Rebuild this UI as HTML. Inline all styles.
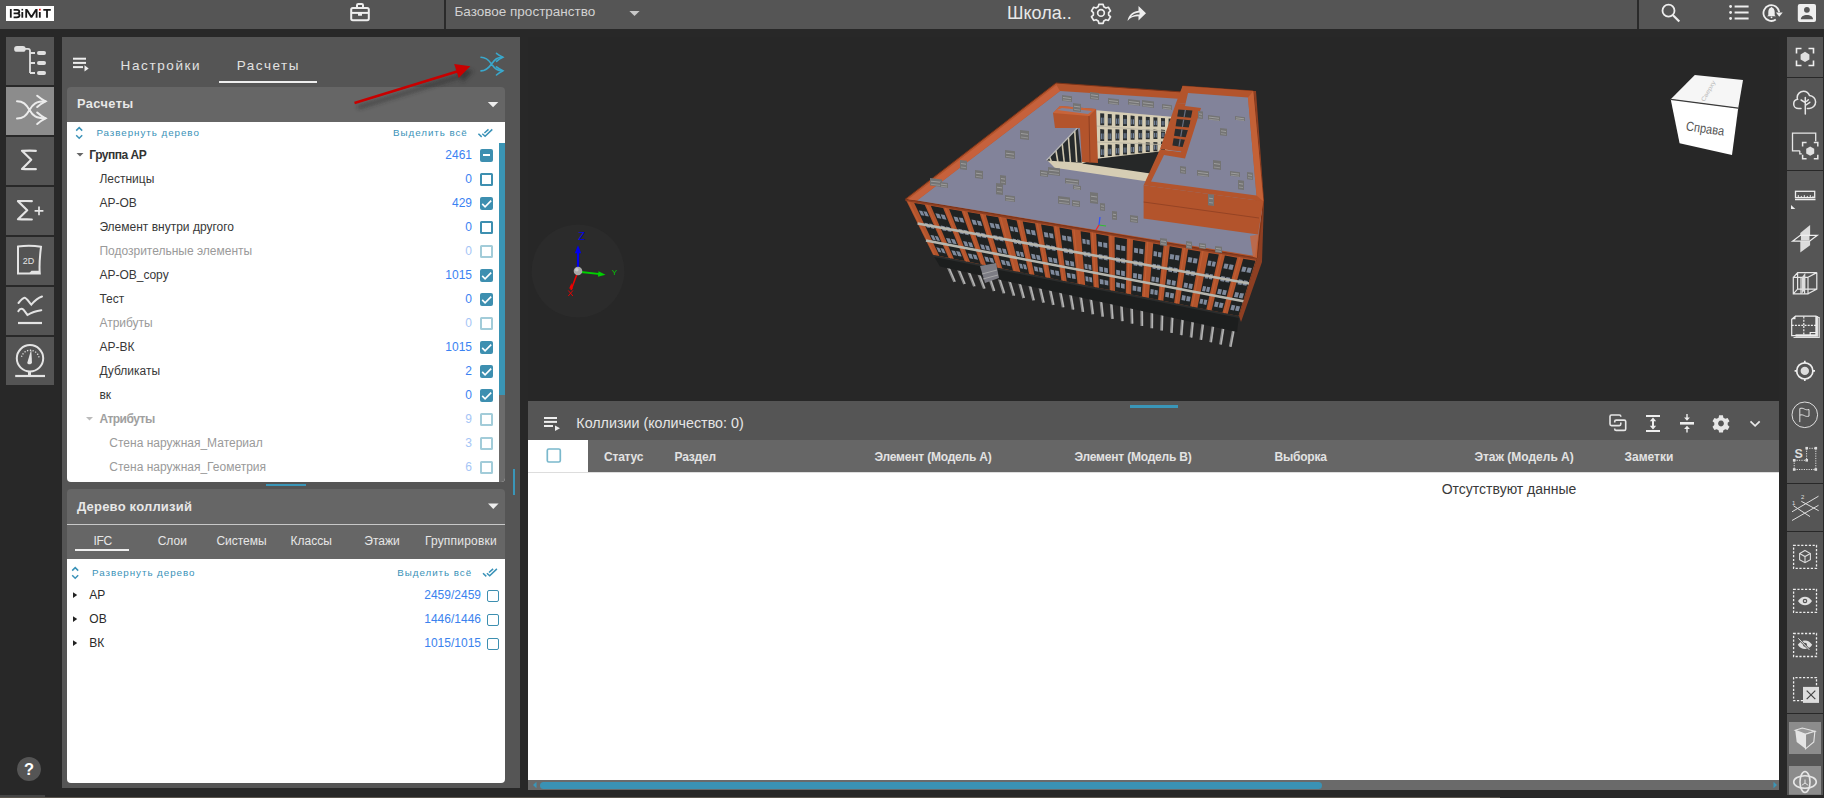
<!DOCTYPE html>
<html><head><meta charset="utf-8">
<style>
*{box-sizing:border-box;margin:0;padding:0}
html,body{width:1824px;height:798px;overflow:hidden;background:#282828;font-family:"Liberation Sans",sans-serif;position:relative}
.a{position:absolute}
.t{position:absolute;white-space:nowrap;line-height:1;z-index:2}
svg{position:absolute;overflow:visible;z-index:2}
/* top bar */
#top{left:0;top:0;width:1824px;height:29px;background:#555}
.sbtn{position:absolute;left:6px;width:48px;height:48px;background:#545454}
.rt{position:absolute;left:1787px;width:36px;background:#555}
.row .lbl{position:absolute;font-size:12px;color:#333}
.cb{position:absolute;width:14px;height:14px;border:2px solid #3d8fb0;border-radius:2px}
.cbf{background:#3d8fb0}
.num{position:absolute;font-size:12px;color:#3b82f0;text-align:right}
</style></head>
<body>
<!-- TOP BAR -->
<div id="top" class="a"></div>
<div class="a" style="left:6px;top:6px;width:48px;height:15px;background:#fff"></div>
<svg style="left:0;top:0" width="60" height="28" viewBox="0 0 60 28">
 <g fill="none" stroke="#1a1a1a" stroke-width="1.8">
  <path d="M10.8 9v8.7"/>
  <path d="M13.6 9.9h3.4c1.5 0 2.3.7 2.3 1.7s-.8 1.7-2.1 1.7h-2.9M13.6 13.3h3.3c1.6 0 2.6.8 2.6 2s-1 2-2.6 2h-3.3"/>
  <path d="M22.3 12v5.7"/>
  <path d="M26.2 9v8.7M26.8 9.8l4.6 7.4 4.6-7.4M36.6 9v8.7" stroke-linejoin="bevel"/>
  <path d="M39.8 12v5.7"/>
  <path d="M43.3 9.8h7.5M47 9.8v7.9"/>
 </g>
 <rect x="21.5" y="8.9" width="1.6" height="1.6" fill="#1a1a1a"/>
 <rect x="39" y="8.8" width="1.7" height="1.7" fill="#e00"/>
</svg>
<svg style="left:340px;top:0" width="40" height="28" viewBox="340 0 40 28">
 <g fill="none" stroke="#eee" stroke-width="2">
  <rect x="351.2" y="8" width="17.6" height="12.2" rx="1.6"/>
  <path d="M357 7.5V5.3c0-.7.5-1.2 1.2-1.2h3.6c.7 0 1.2.5 1.2 1.2v2.2"/>
  <path d="M351 12.9h18"/>
 </g>
 <rect x="358" y="12.5" width="4" height="3.3" rx=".6" fill="#eee"/>
</svg>
<svg style="left:620px;top:0" width="30" height="28" viewBox="620 0 30 28"><path d="M629.4 11h10.2l-5.1 5z" fill="#c8c8c8"/></svg>
<svg style="left:1085px;top:0" width="70" height="28" viewBox="1085 0 70 28">
 <g transform="translate(1101 12.9) scale(0.93)" fill="none" stroke="#eee" stroke-width="1.8" stroke-linejoin="round">
  <path d="M-2.3 -9.2h4.6l.7 2.6 2.3 1.3 2.6-.8 2.3 4-2 1.8v2.6l2 1.8-2.3 4-2.6-.8-2.3 1.3-.7 2.6h-4.6l-.7-2.6-2.3-1.3-2.6.8-2.3-4 2-1.8v-2.6l-2-1.8 2.3-4 2.6.8 2.3-1.3z"/>
  <circle r="3.6"/>
 </g>
 <path d="M1138.5 6l7.5 7.2-7.5 7.2v-4.1c-5 0-8.3 1.4-11 4.6 1-5 4.1-9.3 11-10.2z" fill="#eee"/>
 <path d="M1139.5 12.6c-4 .3-6.8 1.8-8.6 4 2.2-1.5 5-2.1 8.6-2.1z" fill="#555"/>
</svg>
<svg style="left:1650px;top:0" width="174" height="28" viewBox="1650 0 174 28">
 <g fill="none" stroke="#eee" stroke-width="1.8">
  <circle cx="1668.5" cy="10.7" r="6"/>
  <path d="M1673 15.2l6.3 6.3" stroke-width="2.2"/>
  <path d="M1734.6 6.5h14M1734.6 12.5h14M1734.6 18.5h14" stroke-width="1.8"/>
  <path d="M1775.8 19.6A7.9 7.9 0 1 1 1779.2 12.2" stroke-width="1.8"/>
 </g>
 <g fill="#eee">
  <circle cx="1730.6" cy="6.5" r="1.4"/><circle cx="1730.6" cy="12.5" r="1.4"/><circle cx="1730.6" cy="18.5" r="1.4"/>
  <path d="M1775.9 12.4h6.8l-3.4 4.4z"/>
  <path d="M1768.3 15.3v-3.3c0-2.3 1.1-4 2.7-4.5l.5-.9.5.9c1.6.5 2.7 2.2 2.7 4.5v3.3l1.2 1h-8.8z"/>
  <circle cx="1771.5" cy="17.3" r=".9"/>
  <rect x="1797.8" y="4" width="18.2" height="18" rx="2"/>
 </g>
 <g fill="#555">
  <circle cx="1806.9" cy="9.8" r="2.9"/>
  <path d="M1800.8 19.2c0-2.6 2.8-4.2 6.1-4.2s6.1 1.6 6.1 4.2z"/>
 </g>
</svg>
<div class="a" style="left:444px;top:0;width:2px;height:29px;background:#2a2a2a"></div>
<div class="a" style="left:1637px;top:0;width:2px;height:29px;background:#2a2a2a"></div>
<div class="t" style="left:454.5px;top:5px;font-size:13.5px;color:#d2d2d2">Базовое пространство</div>
<div class="t" style="left:1007px;top:4px;font-size:18px;color:#e8e8e8">Школа..</div>

<!-- LEFT SIDEBAR -->
<div class="sbtn" style="top:37px"></div>
<div class="sbtn" style="top:87px;background:#8c8c8c"></div>
<div class="sbtn" style="top:137px"></div>
<div class="sbtn" style="top:187px"></div>
<div class="sbtn" style="top:237px"></div>
<div class="sbtn" style="top:287px"></div>
<div class="sbtn" style="top:337px"></div>
<div class="a" style="left:17px;top:757px;width:24px;height:24px;border-radius:50%;background:#555"></div>
<div class="t" style="left:17px;top:760.5px;width:24px;text-align:center;font-size:16.5px;font-weight:bold;color:#fff">?</div>
<div class="a" style="left:0;top:797px;width:1500px;height:1px;background:#5a554e"></div>
<div class="a" style="left:0;top:795px;width:45px;height:2px;background:#444"></div>
<svg style="left:6px;top:37px" width="48" height="350" viewBox="0 0 48 350">
 <g fill="#e0e0e0">
  <rect x="8.1" y="9" width="11.6" height="5.8" rx="2.9"/>
  <rect x="31" y="14.1" width="9" height="3.9" rx="1.95"/>
  <rect x="31" y="24.1" width="9" height="3.9" rx="1.95"/>
  <rect x="31" y="34.1" width="9" height="3.9" rx="1.95"/>
 </g>
 <g fill="none" stroke="#e0e0e0" stroke-width="1.8">
  <path d="M19 11.8h3c1.2 0 2 .8 2 2V36M24 16h5M24 26h5M24 36h5"/>
 </g>
 <g fill="none" stroke="#ececec" stroke-width="2" stroke-linecap="round" transform="translate(0 50)">
  <path d="M11 14.3C17 14.3 20 17 23.5 23S30 31.3 39.5 31.3M11 31.5C17 31.5 20 29 23.5 23S30 14.3 39.5 14.3"/>
  <path d="M31.2 8.7C34 11 36 12.5 39.5 14.3 36 16 34 17.5 31.2 20M31.2 25.5C34 28 36 29.5 39.5 31.3 36 33 34 34.5 31.2 37"/>
 </g>
 <g fill="none" stroke="#e4e4e4" stroke-width="2.2" stroke-linecap="round" stroke-linejoin="round" transform="translate(0 100)">
  <path d="M29.8 13.8C25 13.4 20 13.6 16 13.8L25.2 22.8 16 32C20.5 32.3 25 32.1 29.8 32.2"/>
 </g>
 <g fill="none" stroke="#e4e4e4" stroke-width="2.2" stroke-linecap="round" stroke-linejoin="round" transform="translate(0 150)">
  <path d="M25.8 14.2C21 13.8 16 14 12 14.2L21.2 23.3 12 32.2C16.5 32.6 21 32.4 25.8 32.5"/>
  <path d="M33 19.4v8.8M28.6 23.8h8.8" stroke-width="1.7" stroke-linecap="butt"/>
 </g>
 <g transform="translate(0 200)">
  <path d="M12 9.5C19 8.5 28 8.5 35 9.8 34 18 33 28 33.8 36.6H12z" fill="none" stroke="#e4e4e4" stroke-width="2"/>
  <path d="M23 36.4l2.4-2.6h8.6v2.6z" fill="#e4e4e4"/>
  <text x="22.6" y="27" font-family="Liberation Sans" font-size="9" fill="#e4e4e4" text-anchor="middle">2D</text>
 </g>
 <g fill="none" stroke="#e4e4e4" stroke-width="2" stroke-linecap="round" transform="translate(0 250)">
  <path d="M12.5 16C15 13 17 11 18.5 10.8S21.5 13 25.3 17.6C28 14.5 31.5 11 36 9.5"/>
  <path d="M12.3 24.2C13.5 22 15 21.5 16.5 22S19 25 21.5 28C24.5 26 29 24 35.3 23.2"/>
  <path d="M12 36h24" stroke-width="2.2" stroke-linecap="butt"/>
 </g>
 <g transform="translate(0 300)">
  <circle cx="24" cy="21.3" r="13.2" fill="none" stroke="#e4e4e4" stroke-width="2"/>
  <path d="M9.2 39h29.8" stroke="#e4e4e4" stroke-width="2.2"/>
  <path d="M22 34.5h3v3.5h-3z" fill="#e4e4e4"/>
  <path d="M25.2 12.4L26 25.5C25.8 27.5 22 28 21.2 26z" fill="#e4e4e4"/>
  <g stroke="#e4e4e4" stroke-width="1.3" stroke-dasharray="1.2 1.6" fill="none"><path d="M15.5 19.8A9 9 0 0 1 33 20.5"/></g>
 </g>
</svg>

<!-- LEFT PANEL -->
<div class="a" style="left:62px;top:37px;width:458px;height:751px;background:#555"></div>
<div class="t" style="left:120.6px;top:58.6px;font-size:13.5px;color:#e2e2e2;letter-spacing:1.6px">Настройки</div>
<div class="t" style="left:236.8px;top:58.6px;font-size:13.5px;color:#e2e2e2;letter-spacing:1.5px">Расчеты</div>
<svg style="left:60px;top:37px" width="460" height="90" viewBox="60 37 460 90">
 <g fill="#eee">
  <rect x="73" y="57.7" width="13" height="2"/><rect x="73" y="61.9" width="13" height="2"/><rect x="73" y="66.1" width="10" height="2"/>
  <path d="M84.5 65.3l4.2 3.1-4.2 3.1z"/>
 </g>
 <g fill="none" stroke="#3aa8cc" stroke-width="1.6" stroke-linecap="round">
  <path d="M481 57.3C485.5 57.3 488 59 491.5 64S497.5 70.8 502.5 70.8M481 70.9C485.5 70.9 488 69 491.5 64S497.5 57.2 502.5 57.2"/>
  <path d="M496.5 53.3C498.5 55 500.5 56 502.8 57.2 500.5 58.3 498.5 59.5 496.5 61.3M496.5 66.8C498.5 68.5 500.5 69.6 502.8 70.8 500.5 72 498.5 73 496.5 75"/>
 </g>
 <path d="M487.8 102h10.5l-5.25 5.2z" fill="#eee"/>
</svg>
<div class="t" style="left:77px;top:97.9px;font-size:12.8px;font-weight:bold;color:#e8e8e8;letter-spacing:0.4px">Расчеты</div>
<div class="t" style="left:77px;top:500px;font-size:13px;font-weight:bold;color:#e8e8e8;letter-spacing:0.2px">Дерево коллизий</div>
<svg style="left:480px;top:495px" width="30" height="20" viewBox="480 495 30 20"><path d="M488 503.6h10.6l-5.3 5.5z" fill="#eee"/></svg>
<div class="t" style="left:93.4px;top:535px;font-size:12px;color:#e6e6e6;letter-spacing:-0.3px">IFC</div>
<div class="t" style="left:157.7px;top:535px;font-size:12px;color:#e6e6e6">Слои</div>
<div class="t" style="left:216.4px;top:535px;font-size:12px;color:#e6e6e6">Системы</div>
<div class="t" style="left:290.6px;top:535px;font-size:12px;color:#e6e6e6">Классы</div>
<div class="t" style="left:364.3px;top:535px;font-size:12px;color:#e6e6e6">Этажи</div>
<div class="t" style="left:424.9px;top:535px;font-size:12px;color:#e6e6e6;letter-spacing:0.2px">Группировки</div>
<div class="a" style="left:75px;top:549px;width:54px;height:2px;background:#eee;z-index:2"></div>
<!-- red arrow -->
<svg style="left:340px;top:40px;z-index:9" width="180" height="80" viewBox="340 40 180 80">
 <defs><filter id="sh" x="-20%" y="-50%" width="140%" height="200%"><feGaussianBlur stdDeviation="2"/></filter></defs>
 <g transform="translate(3.5 4.5)" opacity="0.55" filter="url(#sh)">
  <path d="M354.5 103L456 72" stroke="#222" stroke-width="3"/>
  <path d="M470.3 66.3L454.2 64 458.7 77.9z" fill="#222"/>
 </g>
 <path d="M354.5 103.1L457 71.5" stroke="#c80000" stroke-width="2.6"/>
 <path d="M470.3 66.3L454.2 64 458.7 77.9z" fill="#c80000"/>
</svg>
<div class="a" style="left:219px;top:81px;width:98px;height:2px;background:#eee"></div>

<div class="a" style="left:67px;top:87px;width:438px;height:35px;background:#666;border-radius:4px 4px 0 0"></div>
<div class="a" style="left:67px;top:122px;width:438px;height:360px;background:#fff;border-radius:0 0 4px 4px"></div>
<!-- section1 content -->
<div class="a" style="left:499px;top:143px;width:6px;height:339px;background:#6b6b6b;border-radius:0 0 4px 0"></div>
<div class="a" style="left:499px;top:143px;width:6px;height:252px;background:#3a94b4"></div>
<div class="t" style="left:96.4px;top:128px;font-size:9.8px;letter-spacing:0.95px;color:#3a92b8">Развернуть дерево</div>
<div class="t" style="left:393px;top:128px;font-size:9.8px;letter-spacing:0.95px;color:#3a92b8">Выделить всё</div>
<svg style="left:0;top:0" width="520" height="600" viewBox="0 0 520 600">
 <g fill="none" stroke="#3a92b8" stroke-width="1.5">
  <path d="M76.2 130.6l3-3 3 3M76.2 135.2l3 3 3-3"/>
  <path d="M478.4 133.7l3.3 3.2M482.3 133.7l2.8 2.6 7.2-6.9M484.4 133l4.1-3.6" stroke-width="1.5"/>
  <path d="M72.2 570.6l3-3 3 3M72.2 575.2l3 3 3-3"/>
  <path d="M483 573.2l3.3 3.2M486.9 573.2l2.8 2.6 7.2-6.9M489 572.5l4.1-3.6" stroke-width="1.5"/>
 </g>
</svg>
<!--ROWS-->
<div class="t" style="left:89.3px;top:149.04px;font-size:12px;color:#333;font-weight:bold;letter-spacing:-0.5px">Группа АР</div>
<div class="t" style="right:1352px;top:149.04px;font-size:12px;color:#3b82f2">2461</div>
<div class="a" style="left:479.8px;top:148.6px;width:13.4px;height:13.4px;background:#3d8fb0;border-radius:2px"></div><div class="a" style="left:482.8px;top:154.1px;width:7.4px;height:2.4px;background:#fff"></div>
<div class="t" style="left:99.4px;top:173.04px;font-size:12px;color:#383838">Лестницы</div>
<div class="t" style="right:1352px;top:173.04px;font-size:12px;color:#3b82f2">0</div>
<div class="a" style="left:479.8px;top:172.6px;width:13.4px;height:13.4px;border:2px solid #3d8fb0;border-radius:1.5px"></div>
<div class="t" style="left:99.4px;top:197.04px;font-size:12px;color:#383838">АР-ОВ</div>
<div class="t" style="right:1352px;top:197.04px;font-size:12px;color:#3b82f2">429</div>
<div class="a" style="left:479.8px;top:196.6px;width:13.4px;height:13.4px;background:#3d8fb0;border-radius:2px"></div><svg style="left:479.8px;top:196.6px" width="13.4" height="13.4" viewBox="0 0 14 14"><path d="M2.3 7.2l3 3 6.4-6.4" fill="none" stroke="#fff" stroke-width="1.7"/></svg>
<div class="t" style="left:99.4px;top:221.04px;font-size:12px;color:#383838">Элемент внутри другого</div>
<div class="t" style="right:1352px;top:221.04px;font-size:12px;color:#3b82f2">0</div>
<div class="a" style="left:479.8px;top:220.6px;width:13.4px;height:13.4px;border:2px solid #3d8fb0;border-radius:1.5px"></div>
<div class="t" style="left:99.4px;top:245.04px;font-size:12px;color:#9a9a9a">Подозрительные элементы</div>
<div class="t" style="right:1352px;top:245.04px;font-size:12px;color:#a6c6f6">0</div>
<div class="a" style="left:479.8px;top:244.6px;width:13.4px;height:13.4px;border:2px solid #a2ccd9;border-radius:1.5px"></div>
<div class="t" style="left:99.4px;top:269.04px;font-size:12px;color:#383838">АР-ОВ_copy</div>
<div class="t" style="right:1352px;top:269.04px;font-size:12px;color:#3b82f2">1015</div>
<div class="a" style="left:479.8px;top:268.6px;width:13.4px;height:13.4px;background:#3d8fb0;border-radius:2px"></div><svg style="left:479.8px;top:268.6px" width="13.4" height="13.4" viewBox="0 0 14 14"><path d="M2.3 7.2l3 3 6.4-6.4" fill="none" stroke="#fff" stroke-width="1.7"/></svg>
<div class="t" style="left:99.4px;top:293.04px;font-size:12px;color:#383838">Тест</div>
<div class="t" style="right:1352px;top:293.04px;font-size:12px;color:#3b82f2">0</div>
<div class="a" style="left:479.8px;top:292.6px;width:13.4px;height:13.4px;background:#3d8fb0;border-radius:2px"></div><svg style="left:479.8px;top:292.6px" width="13.4" height="13.4" viewBox="0 0 14 14"><path d="M2.3 7.2l3 3 6.4-6.4" fill="none" stroke="#fff" stroke-width="1.7"/></svg>
<div class="t" style="left:99.4px;top:317.04px;font-size:12px;color:#9a9a9a">Атрибуты</div>
<div class="t" style="right:1352px;top:317.04px;font-size:12px;color:#a6c6f6">0</div>
<div class="a" style="left:479.8px;top:316.6px;width:13.4px;height:13.4px;border:2px solid #a2ccd9;border-radius:1.5px"></div>
<div class="t" style="left:99.4px;top:341.04px;font-size:12px;color:#383838">АР-ВК</div>
<div class="t" style="right:1352px;top:341.04px;font-size:12px;color:#3b82f2">1015</div>
<div class="a" style="left:479.8px;top:340.6px;width:13.4px;height:13.4px;background:#3d8fb0;border-radius:2px"></div><svg style="left:479.8px;top:340.6px" width="13.4" height="13.4" viewBox="0 0 14 14"><path d="M2.3 7.2l3 3 6.4-6.4" fill="none" stroke="#fff" stroke-width="1.7"/></svg>
<div class="t" style="left:99.4px;top:365.04px;font-size:12px;color:#383838">Дубликаты</div>
<div class="t" style="right:1352px;top:365.04px;font-size:12px;color:#3b82f2">2</div>
<div class="a" style="left:479.8px;top:364.6px;width:13.4px;height:13.4px;background:#3d8fb0;border-radius:2px"></div><svg style="left:479.8px;top:364.6px" width="13.4" height="13.4" viewBox="0 0 14 14"><path d="M2.3 7.2l3 3 6.4-6.4" fill="none" stroke="#fff" stroke-width="1.7"/></svg>
<div class="t" style="left:99.4px;top:389.04px;font-size:12px;color:#383838">вк</div>
<div class="t" style="right:1352px;top:389.04px;font-size:12px;color:#3b82f2">0</div>
<div class="a" style="left:479.8px;top:388.6px;width:13.4px;height:13.4px;background:#3d8fb0;border-radius:2px"></div><svg style="left:479.8px;top:388.6px" width="13.4" height="13.4" viewBox="0 0 14 14"><path d="M2.3 7.2l3 3 6.4-6.4" fill="none" stroke="#fff" stroke-width="1.7"/></svg>
<div class="t" style="left:99.4px;top:413.04px;font-size:12px;color:#a0a0a0;font-weight:bold;letter-spacing:-0.5px">Атрибуты</div>
<div class="t" style="right:1352px;top:413.04px;font-size:12px;color:#a6c6f6">9</div>
<div class="a" style="left:479.8px;top:412.6px;width:13.4px;height:13.4px;border:2px solid #a2ccd9;border-radius:1.5px"></div>
<div class="t" style="left:109.3px;top:437.04px;font-size:12px;color:#9a9a9a">Стена наружная_Материал</div>
<div class="t" style="right:1352px;top:437.04px;font-size:12px;color:#a6c6f6">3</div>
<div class="a" style="left:479.8px;top:436.6px;width:13.4px;height:13.4px;border:2px solid #a2ccd9;border-radius:1.5px"></div>
<div class="t" style="left:109.3px;top:461.04px;font-size:12px;color:#9a9a9a">Стена наружная_Геометрия</div>
<div class="t" style="right:1352px;top:461.04px;font-size:12px;color:#a6c6f6">6</div>
<div class="a" style="left:479.8px;top:460.6px;width:13.4px;height:13.4px;border:2px solid #a2ccd9;border-radius:1.5px"></div>
<svg style="left:0;top:0" width="200" height="480" viewBox="0 0 200 480"><path d="M76.5 153h7l-3.5 3.6z" fill="#666"/><path d="M86 417h7l-3.5 3.6z" fill="#bbb"/></svg>
<!--/ROWS-->
<div class="a" style="left:266px;top:484px;width:40px;height:2px;background:#3a96b8"></div>
<div class="a" style="left:513px;top:469px;width:1.5px;height:26px;background:#3a96b8"></div>
<div class="a" style="left:67px;top:489px;width:438px;height:70px;background:#666;border-radius:4px 4px 0 0"></div>
<div class="a" style="left:67px;top:524px;width:438px;height:1px;background:#c8c8c8"></div>
<div class="a" style="left:67px;top:559px;width:438px;height:224px;background:#fff;border-radius:0 0 4px 4px"></div>

<div class="t" style="left:92px;top:567.9px;font-size:9.8px;letter-spacing:0.95px;color:#3a92b8">Развернуть дерево</div>
<div class="t" style="left:397.3px;top:567.9px;font-size:9.8px;letter-spacing:0.95px;color:#3a92b8">Выделить всё</div>
<div class="t" style="left:89.3px;top:588.64px;font-size:12px;color:#2a2a2a">АР</div>
<div class="t" style="right:1343px;top:588.64px;font-size:12px;color:#3b82ee">2459/2459</div>
<div class="a" style="left:487.3px;top:589.5px;width:12px;height:12px;border:1.5px solid #3d8fb0;border-radius:2px;z-index:2"></div>
<div class="t" style="left:89.3px;top:612.64px;font-size:12px;color:#2a2a2a">ОВ</div>
<div class="t" style="right:1343px;top:612.64px;font-size:12px;color:#3b82ee">1446/1446</div>
<div class="a" style="left:487.3px;top:613.5px;width:12px;height:12px;border:1.5px solid #3d8fb0;border-radius:2px;z-index:2"></div>
<div class="t" style="left:89.3px;top:636.64px;font-size:12px;color:#2a2a2a">ВК</div>
<div class="t" style="right:1343px;top:636.64px;font-size:12px;color:#3b82ee">1015/1015</div>
<div class="a" style="left:487.3px;top:637.5px;width:12px;height:12px;border:1.5px solid #3d8fb0;border-radius:2px;z-index:2"></div>
<svg style="left:0;top:0" width="200" height="700" viewBox="0 0 200 700"><path d="M73 592.2v5.8l4.2-2.9z" fill="#222"/><path d="M73 616.2v5.8l4.2-2.9z" fill="#222"/><path d="M73 640.2v5.8l4.2-2.9z" fill="#222"/></svg>
<!-- VIEWPORT -->
<div class="a" style="left:528px;top:37px;width:1251px;height:364px;background:#272727"></div>

<!--BUILDING-->
<svg style="left:880px;top:70px" width="400" height="290" viewBox="880 70 400 290">
<line x1="947.1" y1="264.6" x2="954.6" y2="281.7" stroke="#8c8c8c" stroke-width="2.8" />
<line x1="947.6" y1="264.6" x2="955.1" y2="281.7" stroke="#bdbdbd" stroke-width="1.0" />
<line x1="957.4" y1="266.9" x2="964.5" y2="284.0" stroke="#8c8c8c" stroke-width="2.8" />
<line x1="957.9" y1="266.9" x2="965.0" y2="284.0" stroke="#bdbdbd" stroke-width="1.0" />
<line x1="967.6" y1="269.1" x2="974.4" y2="286.3" stroke="#8c8c8c" stroke-width="2.8" />
<line x1="968.1" y1="269.1" x2="974.9" y2="286.3" stroke="#bdbdbd" stroke-width="1.0" />
<line x1="977.8" y1="271.4" x2="984.3" y2="288.6" stroke="#8c8c8c" stroke-width="2.8" />
<line x1="978.3" y1="271.4" x2="984.8" y2="288.6" stroke="#bdbdbd" stroke-width="1.0" />
<line x1="988.1" y1="273.7" x2="994.1" y2="291.0" stroke="#8c8c8c" stroke-width="2.8" />
<line x1="988.6" y1="273.7" x2="994.6" y2="291.0" stroke="#bdbdbd" stroke-width="1.0" />
<line x1="998.3" y1="275.9" x2="1004.0" y2="293.3" stroke="#8c8c8c" stroke-width="2.8" />
<line x1="998.8" y1="275.9" x2="1004.5" y2="293.3" stroke="#bdbdbd" stroke-width="1.0" />
<line x1="1008.6" y1="278.2" x2="1013.9" y2="295.6" stroke="#8c8c8c" stroke-width="2.8" />
<line x1="1009.1" y1="278.2" x2="1014.4" y2="295.6" stroke="#bdbdbd" stroke-width="1.0" />
<line x1="1018.8" y1="280.4" x2="1023.7" y2="298.0" stroke="#8c8c8c" stroke-width="2.8" />
<line x1="1019.3" y1="280.4" x2="1024.2" y2="298.0" stroke="#bdbdbd" stroke-width="1.0" />
<line x1="1029.1" y1="282.7" x2="1033.6" y2="300.3" stroke="#8c8c8c" stroke-width="2.8" />
<line x1="1029.6" y1="282.7" x2="1034.1" y2="300.3" stroke="#bdbdbd" stroke-width="1.0" />
<line x1="1039.3" y1="285.0" x2="1043.5" y2="302.6" stroke="#8c8c8c" stroke-width="2.8" />
<line x1="1039.8" y1="285.0" x2="1044.0" y2="302.6" stroke="#bdbdbd" stroke-width="1.0" />
<line x1="1049.5" y1="287.2" x2="1053.3" y2="304.9" stroke="#8c8c8c" stroke-width="2.8" />
<line x1="1050.0" y1="287.2" x2="1053.8" y2="304.9" stroke="#bdbdbd" stroke-width="1.0" />
<line x1="1059.8" y1="289.5" x2="1063.2" y2="307.3" stroke="#8c8c8c" stroke-width="2.8" />
<line x1="1060.3" y1="289.5" x2="1063.7" y2="307.3" stroke="#bdbdbd" stroke-width="1.0" />
<line x1="1070.0" y1="291.7" x2="1073.1" y2="309.6" stroke="#8c8c8c" stroke-width="2.8" />
<line x1="1070.5" y1="291.7" x2="1073.6" y2="309.6" stroke="#bdbdbd" stroke-width="1.0" />
<line x1="1080.3" y1="294.0" x2="1082.9" y2="311.9" stroke="#8c8c8c" stroke-width="2.8" />
<line x1="1080.8" y1="294.0" x2="1083.4" y2="311.9" stroke="#bdbdbd" stroke-width="1.0" />
<line x1="1090.5" y1="296.2" x2="1092.8" y2="314.2" stroke="#8c8c8c" stroke-width="2.8" />
<line x1="1091.0" y1="296.2" x2="1093.2" y2="314.2" stroke="#bdbdbd" stroke-width="1.0" />
<line x1="1100.7" y1="298.5" x2="1102.6" y2="316.6" stroke="#8c8c8c" stroke-width="2.8" />
<line x1="1101.2" y1="298.5" x2="1103.1" y2="316.6" stroke="#bdbdbd" stroke-width="1.0" />
<line x1="1111.0" y1="300.8" x2="1112.4" y2="318.9" stroke="#8c8c8c" stroke-width="2.8" />
<line x1="1111.5" y1="300.8" x2="1112.9" y2="318.9" stroke="#bdbdbd" stroke-width="1.0" />
<line x1="1121.2" y1="303.0" x2="1122.3" y2="321.2" stroke="#8c8c8c" stroke-width="2.8" />
<line x1="1121.7" y1="303.0" x2="1122.8" y2="321.2" stroke="#bdbdbd" stroke-width="1.0" />
<line x1="1131.5" y1="305.3" x2="1132.1" y2="323.6" stroke="#8c8c8c" stroke-width="2.8" />
<line x1="1132.0" y1="305.3" x2="1132.6" y2="323.6" stroke="#bdbdbd" stroke-width="1.0" />
<line x1="1141.7" y1="307.5" x2="1141.9" y2="325.9" stroke="#8c8c8c" stroke-width="2.8" />
<line x1="1142.2" y1="307.5" x2="1142.4" y2="325.9" stroke="#bdbdbd" stroke-width="1.0" />
<line x1="1151.9" y1="309.8" x2="1151.8" y2="328.2" stroke="#8c8c8c" stroke-width="2.8" />
<line x1="1152.4" y1="309.8" x2="1152.3" y2="328.2" stroke="#bdbdbd" stroke-width="1.0" />
<line x1="1162.2" y1="312.1" x2="1161.6" y2="330.5" stroke="#8c8c8c" stroke-width="2.8" />
<line x1="1162.7" y1="312.1" x2="1162.1" y2="330.5" stroke="#bdbdbd" stroke-width="1.0" />
<line x1="1172.4" y1="314.3" x2="1171.4" y2="332.9" stroke="#8c8c8c" stroke-width="2.8" />
<line x1="1172.9" y1="314.3" x2="1171.9" y2="332.9" stroke="#bdbdbd" stroke-width="1.0" />
<line x1="1182.7" y1="316.6" x2="1181.2" y2="335.2" stroke="#8c8c8c" stroke-width="2.8" />
<line x1="1183.2" y1="316.6" x2="1181.7" y2="335.2" stroke="#bdbdbd" stroke-width="1.0" />
<line x1="1192.9" y1="318.8" x2="1191.1" y2="337.5" stroke="#8c8c8c" stroke-width="2.8" />
<line x1="1193.4" y1="318.8" x2="1191.6" y2="337.5" stroke="#bdbdbd" stroke-width="1.0" />
<line x1="1203.2" y1="321.1" x2="1200.9" y2="339.9" stroke="#8c8c8c" stroke-width="2.8" />
<line x1="1203.7" y1="321.1" x2="1201.4" y2="339.9" stroke="#bdbdbd" stroke-width="1.0" />
<line x1="1213.4" y1="323.4" x2="1210.7" y2="342.2" stroke="#8c8c8c" stroke-width="2.8" />
<line x1="1213.9" y1="323.4" x2="1211.2" y2="342.2" stroke="#bdbdbd" stroke-width="1.0" />
<line x1="1223.6" y1="325.6" x2="1220.5" y2="344.5" stroke="#8c8c8c" stroke-width="2.8" />
<line x1="1224.1" y1="325.6" x2="1221.0" y2="344.5" stroke="#bdbdbd" stroke-width="1.0" />
<line x1="1233.9" y1="327.9" x2="1230.3" y2="346.8" stroke="#8c8c8c" stroke-width="2.8" />
<line x1="1234.4" y1="327.9" x2="1230.8" y2="346.8" stroke="#bdbdbd" stroke-width="1.0" />
<polygon points="933.0,254.7 1239.0,316.0 1237.0,332.0 940.0,266.5" fill="#1c1e1e" />
<polygon points="932.0,253.7 1239.0,316.0 1239.0,318.0 933.0,256.7" fill="#2a2c2c" />
<polygon points="905.5,199.0 1257.0,258.0 1239.0,316.0 933.0,254.7" fill="#b3542c" />
<polygon points="914.2,203.0 924.7,204.8 948.6,257.8 939.4,256.0" fill="#1f2222" />
<polygon points="918.9,210.5 922.3,211.1 924.5,215.8 921.2,215.2" fill="#7f8a9c" />
<polygon points="923.3,211.3 926.7,211.8 928.9,216.6 925.5,216.0" fill="#7f8a9c" />
<polygon points="924.7,222.8 928.0,223.4 930.2,228.1 927.0,227.5" fill="#7f8a9c" />
<polygon points="929.0,223.5 932.3,224.1 934.5,228.9 931.2,228.3" fill="#7f8a9c" />
<polygon points="930.5,235.0 933.7,235.6 935.9,240.4 932.8,239.8" fill="#7f8a9c" />
<polygon points="934.7,235.8 937.9,236.4 940.0,241.1 936.9,240.5" fill="#7f8a9c" />
<polygon points="936.3,247.3 939.4,247.9 941.6,252.6 938.6,252.0" fill="#7f8a9c" />
<polygon points="940.4,248.1 943.5,248.7 945.6,253.4 942.6,252.8" fill="#7f8a9c" />
<polygon points="930.8,205.8 943.1,207.9 964.7,261.1 953.9,258.9" fill="#1f2222" />
<polygon points="935.4,213.3 939.4,214.0 941.4,218.8 937.4,218.1" fill="#7f8a9c" />
<polygon points="940.6,214.2 944.6,214.9 946.5,219.7 942.6,219.0" fill="#7f8a9c" />
<polygon points="940.7,225.6 944.6,226.3 946.6,231.1 942.8,230.4" fill="#7f8a9c" />
<polygon points="945.8,226.5 949.6,227.2 951.6,232.0 947.8,231.3" fill="#7f8a9c" />
<polygon points="946.0,237.9 949.8,238.6 951.8,243.4 948.1,242.7" fill="#7f8a9c" />
<polygon points="950.9,238.8 954.7,239.5 956.7,244.3 952.9,243.6" fill="#7f8a9c" />
<polygon points="951.4,250.2 955.0,250.9 957.0,255.7 953.4,255.0" fill="#7f8a9c" />
<polygon points="956.1,251.1 959.8,251.8 961.7,256.6 958.1,255.9" fill="#7f8a9c" />
<polygon points="949.1,208.9 961.5,211.0 980.8,264.3 970.0,262.1" fill="#1f2222" />
<polygon points="953.5,216.5 957.5,217.2 959.3,221.9 955.3,221.2" fill="#7f8a9c" />
<polygon points="958.7,217.4 962.7,218.1 964.4,222.8 960.5,222.1" fill="#7f8a9c" />
<polygon points="958.3,228.8 962.1,229.5 963.9,234.2 960.1,233.5" fill="#7f8a9c" />
<polygon points="963.3,229.7 967.2,230.4 968.9,235.2 965.1,234.5" fill="#7f8a9c" />
<polygon points="963.1,241.1 966.8,241.8 968.6,246.6 964.9,245.9" fill="#7f8a9c" />
<polygon points="968.0,242.0 971.7,242.7 973.5,247.5 969.7,246.8" fill="#7f8a9c" />
<polygon points="967.8,253.4 971.5,254.1 973.3,258.9 969.7,258.2" fill="#7f8a9c" />
<polygon points="972.6,254.3 976.2,255.1 978.0,259.8 974.4,259.1" fill="#7f8a9c" />
<polygon points="967.5,212.1 979.8,214.1 996.9,267.5 986.1,265.3" fill="#1f2222" />
<polygon points="971.5,219.6 975.5,220.3 977.1,225.1 973.2,224.4" fill="#7f8a9c" />
<polygon points="976.7,220.5 980.7,221.2 982.3,226.0 978.3,225.3" fill="#7f8a9c" />
<polygon points="975.8,231.9 979.7,232.6 981.3,237.4 977.4,236.7" fill="#7f8a9c" />
<polygon points="980.9,232.8 984.7,233.5 986.3,238.3 982.4,237.6" fill="#7f8a9c" />
<polygon points="980.1,244.3 983.8,245.0 985.4,249.8 981.7,249.1" fill="#7f8a9c" />
<polygon points="985.0,245.2 988.7,245.9 990.3,250.7 986.6,250.0" fill="#7f8a9c" />
<polygon points="984.3,256.6 988.0,257.3 989.6,262.1 986.0,261.4" fill="#7f8a9c" />
<polygon points="989.1,257.6 992.7,258.3 994.3,263.0 990.7,262.3" fill="#7f8a9c" />
<polygon points="985.9,215.2 998.2,217.2 1013.0,270.7 1002.3,268.6" fill="#1f2222" />
<polygon points="989.6,222.7 993.6,223.4 995.0,228.2 991.0,227.5" fill="#7f8a9c" />
<polygon points="994.8,223.6 998.8,224.3 1000.1,229.1 996.2,228.4" fill="#7f8a9c" />
<polygon points="993.3,235.1 997.2,235.8 998.6,240.6 994.8,239.9" fill="#7f8a9c" />
<polygon points="998.4,236.0 1002.3,236.7 1003.6,241.5 999.8,240.8" fill="#7f8a9c" />
<polygon points="997.1,247.5 1000.8,248.2 1002.2,253.0 998.5,252.2" fill="#7f8a9c" />
<polygon points="1002.0,248.4 1005.7,249.1 1007.1,253.9 1003.4,253.2" fill="#7f8a9c" />
<polygon points="1000.8,259.8 1004.5,260.5 1005.9,265.3 1002.3,264.6" fill="#7f8a9c" />
<polygon points="1005.6,260.8 1009.2,261.5 1010.6,266.3 1007.0,265.5" fill="#7f8a9c" />
<polygon points="1006.5,218.6 1016.6,220.4 1029.1,274.0 1020.3,272.2" fill="#1f2222" />
<polygon points="1009.6,226.2 1012.9,226.7 1014.0,231.5 1010.8,231.0" fill="#7f8a9c" />
<polygon points="1013.8,226.9 1017.1,227.5 1018.3,232.3 1015.0,231.7" fill="#7f8a9c" />
<polygon points="1012.7,238.6 1015.9,239.2 1017.1,243.9 1014.0,243.4" fill="#7f8a9c" />
<polygon points="1016.9,239.3 1020.1,239.9 1021.2,244.7 1018.1,244.1" fill="#7f8a9c" />
<polygon points="1015.9,251.0 1019.0,251.6 1020.2,256.4 1017.1,255.8" fill="#7f8a9c" />
<polygon points="1019.9,251.7 1023.0,252.3 1024.1,257.1 1021.1,256.5" fill="#7f8a9c" />
<polygon points="1019.1,263.4 1022.0,264.0 1023.2,268.8 1020.3,268.2" fill="#7f8a9c" />
<polygon points="1023.0,264.1 1025.9,264.7 1027.1,269.5 1024.1,268.9" fill="#7f8a9c" />
<polygon points="1022.7,221.4 1035.0,223.5 1045.3,277.2 1034.5,275.0" fill="#1f2222" />
<polygon points="1025.7,229.0 1029.7,229.7 1030.7,234.5 1026.8,233.8" fill="#7f8a9c" />
<polygon points="1030.9,229.9 1034.9,230.6 1035.9,235.4 1031.9,234.7" fill="#7f8a9c" />
<polygon points="1028.4,241.4 1032.3,242.1 1033.3,246.9 1029.5,246.2" fill="#7f8a9c" />
<polygon points="1033.5,242.3 1037.4,243.0 1038.3,247.8 1034.5,247.1" fill="#7f8a9c" />
<polygon points="1031.1,253.8 1034.9,254.5 1035.9,259.3 1032.2,258.6" fill="#7f8a9c" />
<polygon points="1036.0,254.7 1039.8,255.4 1040.7,260.3 1037.0,259.5" fill="#7f8a9c" />
<polygon points="1033.8,266.2 1037.4,267.0 1038.4,271.8 1034.8,271.0" fill="#7f8a9c" />
<polygon points="1038.6,267.2 1042.2,267.9 1043.1,272.7 1039.5,272.0" fill="#7f8a9c" />
<polygon points="1041.1,224.5 1053.4,226.6 1061.4,280.4 1050.6,278.3" fill="#1f2222" />
<polygon points="1043.8,232.1 1047.8,232.8 1048.6,237.6 1044.6,236.9" fill="#7f8a9c" />
<polygon points="1049.0,233.0 1053.0,233.7 1053.7,238.5 1049.8,237.8" fill="#7f8a9c" />
<polygon points="1046.0,244.6 1049.8,245.3 1050.6,250.1 1046.8,249.4" fill="#7f8a9c" />
<polygon points="1051.0,245.5 1054.9,246.2 1055.6,251.0 1051.8,250.3" fill="#7f8a9c" />
<polygon points="1048.1,257.0 1051.9,257.7 1052.7,262.5 1049.0,261.8" fill="#7f8a9c" />
<polygon points="1053.0,257.9 1056.8,258.6 1057.5,263.4 1053.8,262.7" fill="#7f8a9c" />
<polygon points="1050.3,269.5 1053.9,270.2 1054.7,275.0 1051.1,274.3" fill="#7f8a9c" />
<polygon points="1055.0,270.4 1058.7,271.1 1059.4,275.9 1055.8,275.2" fill="#7f8a9c" />
<polygon points="1059.4,227.6 1071.7,229.7 1077.5,283.6 1066.7,281.5" fill="#1f2222" />
<polygon points="1061.9,235.2 1065.9,235.9 1066.5,240.7 1062.5,240.1" fill="#7f8a9c" />
<polygon points="1067.1,236.1 1071.1,236.8 1071.6,241.7 1067.7,241.0" fill="#7f8a9c" />
<polygon points="1063.5,247.7 1067.4,248.4 1068.0,253.2 1064.1,252.5" fill="#7f8a9c" />
<polygon points="1068.6,248.6 1072.4,249.3 1073.0,254.1 1069.1,253.4" fill="#7f8a9c" />
<polygon points="1065.1,260.2 1068.9,260.9 1069.5,265.7 1065.8,265.0" fill="#7f8a9c" />
<polygon points="1070.0,261.1 1073.8,261.8 1074.3,266.6 1070.6,265.9" fill="#7f8a9c" />
<polygon points="1066.8,272.7 1070.4,273.4 1071.0,278.2 1067.4,277.5" fill="#7f8a9c" />
<polygon points="1071.5,273.6 1075.2,274.3 1075.7,279.1 1072.1,278.4" fill="#7f8a9c" />
<polygon points="1080.6,231.2 1090.1,232.8 1093.6,286.9 1085.2,285.2" fill="#1f2222" />
<polygon points="1082.3,238.8 1085.4,239.3 1085.8,244.1 1082.7,243.6" fill="#7f8a9c" />
<polygon points="1086.4,239.5 1089.5,240.0 1089.8,244.8 1086.7,244.3" fill="#7f8a9c" />
<polygon points="1083.4,251.3 1086.4,251.8 1086.7,256.7 1083.8,256.1" fill="#7f8a9c" />
<polygon points="1087.3,252.0 1090.3,252.5 1090.6,257.4 1087.6,256.8" fill="#7f8a9c" />
<polygon points="1084.4,263.8 1087.3,264.3 1087.7,269.2 1084.8,268.6" fill="#7f8a9c" />
<polygon points="1088.2,264.5 1091.1,265.0 1091.5,269.9 1088.6,269.3" fill="#7f8a9c" />
<polygon points="1085.4,276.3 1088.3,276.8 1088.6,281.7 1085.8,281.1" fill="#7f8a9c" />
<polygon points="1089.1,277.0 1092.0,277.6 1092.3,282.4 1089.5,281.8" fill="#7f8a9c" />
<polygon points="1096.2,233.8 1108.5,235.9 1109.7,290.1 1098.9,287.9" fill="#1f2222" />
<polygon points="1098.0,241.5 1102.0,242.2 1102.2,247.0 1098.2,246.3" fill="#7f8a9c" />
<polygon points="1103.2,242.4 1107.2,243.1 1107.3,247.9 1103.4,247.2" fill="#7f8a9c" />
<polygon points="1098.6,254.0 1102.5,254.7 1102.7,259.6 1098.8,258.9" fill="#7f8a9c" />
<polygon points="1103.6,254.9 1107.5,255.6 1107.6,260.5 1103.8,259.8" fill="#7f8a9c" />
<polygon points="1099.2,266.5 1102.9,267.3 1103.1,272.1 1099.4,271.4" fill="#7f8a9c" />
<polygon points="1104.1,267.5 1107.8,268.2 1108.0,273.0 1104.2,272.3" fill="#7f8a9c" />
<polygon points="1099.8,279.1 1103.4,279.8 1103.6,284.6 1100.0,283.9" fill="#7f8a9c" />
<polygon points="1104.5,280.0 1108.2,280.7 1108.3,285.6 1104.7,284.8" fill="#7f8a9c" />
<polygon points="1114.6,236.9 1126.9,239.0 1125.8,293.3 1115.0,291.2" fill="#1f2222" />
<polygon points="1116.1,244.6 1120.1,245.3 1120.1,250.2 1116.1,249.5" fill="#7f8a9c" />
<polygon points="1121.3,245.5 1125.3,246.2 1125.2,251.1 1121.2,250.4" fill="#7f8a9c" />
<polygon points="1116.1,257.2 1120.0,257.9 1120.0,262.7 1116.2,262.0" fill="#7f8a9c" />
<polygon points="1121.2,258.1 1125.1,258.8 1125.0,263.6 1121.2,262.9" fill="#7f8a9c" />
<polygon points="1116.2,269.7 1120.0,270.4 1119.9,275.3 1116.2,274.6" fill="#7f8a9c" />
<polygon points="1121.1,270.6 1124.9,271.3 1124.8,276.2 1121.1,275.5" fill="#7f8a9c" />
<polygon points="1116.2,282.3 1119.9,283.0 1119.9,287.8 1116.3,287.1" fill="#7f8a9c" />
<polygon points="1121.0,283.2 1124.6,283.9 1124.6,288.8 1121.0,288.1" fill="#7f8a9c" />
<polygon points="1133.0,240.1 1145.3,242.1 1141.9,296.5 1131.1,294.4" fill="#1f2222" />
<polygon points="1134.2,247.7 1138.1,248.4 1137.9,253.3 1134.0,252.6" fill="#7f8a9c" />
<polygon points="1139.4,248.6 1143.4,249.3 1143.1,254.2 1139.1,253.5" fill="#7f8a9c" />
<polygon points="1133.7,260.3 1137.6,261.0 1137.3,265.9 1133.5,265.2" fill="#7f8a9c" />
<polygon points="1138.7,261.2 1142.6,261.9 1142.3,266.8 1138.5,266.1" fill="#7f8a9c" />
<polygon points="1133.2,272.9 1137.0,273.6 1136.7,278.5 1133.0,277.8" fill="#7f8a9c" />
<polygon points="1138.1,273.8 1141.9,274.5 1141.6,279.4 1137.9,278.7" fill="#7f8a9c" />
<polygon points="1132.7,285.5 1136.4,286.2 1136.2,291.1 1132.6,290.4" fill="#7f8a9c" />
<polygon points="1137.5,286.4 1141.1,287.1 1140.8,292.0 1137.2,291.3" fill="#7f8a9c" />
<polygon points="1153.2,243.5 1163.6,245.3 1158.0,299.8 1148.8,297.9" fill="#1f2222" />
<polygon points="1153.8,251.1 1157.2,251.7 1156.8,256.6 1153.4,256.0" fill="#7f8a9c" />
<polygon points="1158.2,251.9 1161.6,252.5 1161.1,257.4 1157.8,256.8" fill="#7f8a9c" />
<polygon points="1152.8,263.8 1156.1,264.3 1155.6,269.2 1152.4,268.6" fill="#7f8a9c" />
<polygon points="1157.1,264.5 1160.4,265.1 1159.9,270.0 1156.6,269.4" fill="#7f8a9c" />
<polygon points="1151.7,276.4 1154.9,277.0 1154.5,281.8 1151.3,281.2" fill="#7f8a9c" />
<polygon points="1155.9,277.1 1159.1,277.7 1158.6,282.6 1155.4,282.0" fill="#7f8a9c" />
<polygon points="1150.7,289.0 1153.8,289.6 1153.3,294.5 1150.3,293.9" fill="#7f8a9c" />
<polygon points="1154.7,289.8 1157.8,290.4 1157.3,295.2 1154.3,294.6" fill="#7f8a9c" />
<polygon points="1169.7,246.3 1182.0,248.4 1174.1,303.0 1163.3,300.8" fill="#1f2222" />
<polygon points="1170.3,254.0 1174.3,254.7 1173.6,259.6 1169.7,258.9" fill="#7f8a9c" />
<polygon points="1175.5,254.9 1179.5,255.6 1178.8,260.5 1174.8,259.8" fill="#7f8a9c" />
<polygon points="1168.8,266.6 1172.6,267.3 1172.0,272.2 1168.2,271.5" fill="#7f8a9c" />
<polygon points="1173.8,267.5 1177.7,268.2 1177.0,273.1 1173.2,272.4" fill="#7f8a9c" />
<polygon points="1167.2,279.3 1171.0,280.0 1170.4,284.9 1166.6,284.2" fill="#7f8a9c" />
<polygon points="1172.1,280.2 1175.9,280.9 1175.2,285.8 1171.5,285.1" fill="#7f8a9c" />
<polygon points="1165.7,291.9 1169.4,292.6 1168.7,297.5 1165.1,296.8" fill="#7f8a9c" />
<polygon points="1170.5,292.8 1174.1,293.5 1173.4,298.4 1169.8,297.7" fill="#7f8a9c" />
<polygon points="1188.1,249.4 1200.4,251.5 1190.2,306.2 1179.4,304.1" fill="#1f2222" />
<polygon points="1188.4,257.1 1192.4,257.8 1191.5,262.7 1187.6,262.0" fill="#7f8a9c" />
<polygon points="1193.6,258.0 1197.6,258.7 1196.7,263.6 1192.7,262.9" fill="#7f8a9c" />
<polygon points="1186.3,269.8 1190.2,270.5 1189.3,275.4 1185.5,274.7" fill="#7f8a9c" />
<polygon points="1191.4,270.7 1195.2,271.4 1194.3,276.3 1190.5,275.6" fill="#7f8a9c" />
<polygon points="1184.3,282.4 1188.0,283.2 1187.2,288.0 1183.5,287.3" fill="#7f8a9c" />
<polygon points="1189.2,283.4 1192.9,284.1 1192.0,289.0 1188.3,288.3" fill="#7f8a9c" />
<polygon points="1182.2,295.1 1185.8,295.8 1185.0,300.7 1181.4,300.0" fill="#7f8a9c" />
<polygon points="1186.9,296.0 1190.6,296.7 1189.7,301.6 1186.1,300.9" fill="#7f8a9c" />
<polygon points="1208.7,252.9 1218.8,254.6 1206.3,309.5 1197.4,307.7" fill="#1f2222" />
<polygon points="1208.3,260.6 1211.6,261.1 1210.6,266.1 1207.3,265.5" fill="#7f8a9c" />
<polygon points="1212.6,261.3 1215.9,261.9 1214.8,266.8 1211.5,266.2" fill="#7f8a9c" />
<polygon points="1205.7,273.3 1208.9,273.8 1207.8,278.8 1204.7,278.2" fill="#7f8a9c" />
<polygon points="1209.8,274.0 1213.0,274.6 1211.9,279.5 1208.8,278.9" fill="#7f8a9c" />
<polygon points="1203.1,286.0 1206.2,286.5 1205.1,291.4 1202.0,290.9" fill="#7f8a9c" />
<polygon points="1207.1,286.7 1210.2,287.3 1209.1,292.2 1206.0,291.6" fill="#7f8a9c" />
<polygon points="1200.4,298.7 1203.4,299.2 1202.4,304.1 1199.4,303.6" fill="#7f8a9c" />
<polygon points="1204.3,299.4 1207.3,300.0 1206.2,304.9 1203.3,304.3" fill="#7f8a9c" />
<polygon points="1224.9,255.6 1237.2,257.7 1222.4,312.7 1211.6,310.5" fill="#1f2222" />
<polygon points="1224.5,263.4 1228.5,264.1 1227.2,269.0 1223.3,268.3" fill="#7f8a9c" />
<polygon points="1229.7,264.3 1233.7,265.0 1232.4,269.9 1228.4,269.2" fill="#7f8a9c" />
<polygon points="1221.4,276.1 1225.3,276.8 1224.0,281.7 1220.2,281.0" fill="#7f8a9c" />
<polygon points="1226.4,277.0 1230.3,277.7 1229.0,282.6 1225.2,281.9" fill="#7f8a9c" />
<polygon points="1218.3,288.8 1222.0,289.5 1220.8,294.4 1217.1,293.7" fill="#7f8a9c" />
<polygon points="1223.2,289.7 1226.9,290.4 1225.6,295.3 1221.9,294.6" fill="#7f8a9c" />
<polygon points="1215.2,301.5 1218.8,302.2 1217.6,307.2 1214.0,306.4" fill="#7f8a9c" />
<polygon points="1219.9,302.4 1223.6,303.2 1222.3,308.1 1218.7,307.4" fill="#7f8a9c" />
<polygon points="1243.2,258.7 1255.5,260.8 1238.5,315.9 1227.7,313.7" fill="#1f2222" />
<polygon points="1242.6,266.5 1246.6,267.2 1245.1,272.1 1241.2,271.4" fill="#7f8a9c" />
<polygon points="1247.8,267.4 1251.8,268.1 1250.3,273.0 1246.3,272.3" fill="#7f8a9c" />
<polygon points="1238.9,279.2 1242.8,279.9 1241.4,284.9 1237.5,284.2" fill="#7f8a9c" />
<polygon points="1244.0,280.2 1247.9,280.9 1246.4,285.8 1242.5,285.1" fill="#7f8a9c" />
<polygon points="1235.3,292.0 1239.1,292.7 1237.6,297.6 1233.9,296.9" fill="#7f8a9c" />
<polygon points="1240.2,292.9 1244.0,293.6 1242.5,298.5 1238.7,297.8" fill="#7f8a9c" />
<polygon points="1231.7,304.7 1235.3,305.4 1233.9,310.4 1230.3,309.7" fill="#7f8a9c" />
<polygon points="1236.4,305.7 1240.1,306.4 1238.6,311.3 1235.0,310.6" fill="#7f8a9c" />
<line x1="907.4" y1="199.3" x2="934.6" y2="255.0" stroke="#c8643a" stroke-width="1.2" opacity="0.6"/>
<line x1="925.9" y1="202.4" x2="950.7" y2="258.2" stroke="#c8643a" stroke-width="1.2" opacity="0.6"/>
<line x1="944.4" y1="205.5" x2="966.8" y2="261.5" stroke="#c8643a" stroke-width="1.2" opacity="0.6"/>
<line x1="962.9" y1="208.6" x2="982.9" y2="264.7" stroke="#c8643a" stroke-width="1.2" opacity="0.6"/>
<line x1="981.4" y1="211.7" x2="999.0" y2="267.9" stroke="#c8643a" stroke-width="1.2" opacity="0.6"/>
<line x1="999.9" y1="214.8" x2="1015.1" y2="271.2" stroke="#c8643a" stroke-width="1.2" opacity="0.6"/>
<line x1="1018.4" y1="217.9" x2="1031.2" y2="274.4" stroke="#c8643a" stroke-width="1.2" opacity="0.6"/>
<line x1="1036.8" y1="221.0" x2="1047.3" y2="277.6" stroke="#c8643a" stroke-width="1.2" opacity="0.6"/>
<line x1="1055.3" y1="224.2" x2="1063.5" y2="280.8" stroke="#c8643a" stroke-width="1.2" opacity="0.6"/>
<line x1="1073.8" y1="227.3" x2="1079.6" y2="284.1" stroke="#c8643a" stroke-width="1.2" opacity="0.6"/>
<line x1="1092.3" y1="230.4" x2="1095.7" y2="287.3" stroke="#c8643a" stroke-width="1.2" opacity="0.6"/>
<line x1="1110.8" y1="233.5" x2="1111.8" y2="290.5" stroke="#c8643a" stroke-width="1.2" opacity="0.6"/>
<line x1="1129.3" y1="236.6" x2="1127.9" y2="293.7" stroke="#c8643a" stroke-width="1.2" opacity="0.6"/>
<line x1="1147.8" y1="239.7" x2="1144.0" y2="297.0" stroke="#c8643a" stroke-width="1.2" opacity="0.6"/>
<line x1="1166.3" y1="242.8" x2="1160.1" y2="300.2" stroke="#c8643a" stroke-width="1.2" opacity="0.6"/>
<line x1="1184.8" y1="245.9" x2="1176.2" y2="303.4" stroke="#c8643a" stroke-width="1.2" opacity="0.6"/>
<line x1="1203.3" y1="249.0" x2="1192.3" y2="306.6" stroke="#c8643a" stroke-width="1.2" opacity="0.6"/>
<line x1="1221.8" y1="252.1" x2="1208.4" y2="309.9" stroke="#c8643a" stroke-width="1.2" opacity="0.6"/>
<line x1="1240.3" y1="255.2" x2="1224.5" y2="313.1" stroke="#c8643a" stroke-width="1.2" opacity="0.6"/>
<line x1="917.6" y1="223.5" x2="1249.1" y2="283.5" stroke="#b6b6ae" stroke-width="2.6" />
<line x1="926.0" y1="240.5" x2="1243.6" y2="301.2" stroke="#b6b6ae" stroke-width="2.6" />
<line x1="905.5" y1="200.0" x2="1257.0" y2="259.0" stroke="#8e3f22" stroke-width="2" />
<polygon points="1252.0,91.0 1256.0,91.0 1264.0,201.0 1262.0,262.0 1241.0,322.0 1239.0,316.0 1257.0,258.0 1262.0,202.0" fill="#8e3f22" />
<polygon points="905.5,199.0 1056.0,83.0 1182.5,92.0 1182.5,86.0 1253.3,91.0 1263.4,201.3 1257.0,258.0" fill="#b3542c" stroke="#7a3318" stroke-width="1"/>
<polygon points="917.0,200.5 1060.0,91.0 1182.0,99.0 1262.0,210.0 1255.0,256.0" fill="#82839a" />
<polygon points="908.0,199.5 1056.5,85.0 1060.0,91.0 917.0,200.5" fill="#c6613c" />
<polygon points="1046.8,159.8 1095.0,161.0 1150.6,173.4 1146.0,181.3 1054.7,167.7" fill="#d6cdb4" />
<polygon points="1096.4,158.7 1160.0,149.7 1150.6,173.4 1082.0,163.5" fill="#262828" />
<polygon points="1096.4,110.2 1174.3,117.0 1175.0,149.7 1096.4,158.7" fill="#d6cdb4" />
<polygon points="1100.2,113.3 1104.2,113.6 1104.2,125.3 1100.2,125.3" fill="#2c3032" />
<line x1="1101.4" y1="117.6" x2="1101.4" y2="123.4" stroke="#7888a0" stroke-width="1.0" />
<line x1="1103.1" y1="117.6" x2="1103.1" y2="123.4" stroke="#7888a0" stroke-width="1.0" />
<polygon points="1100.2,129.1 1104.2,129.4 1104.2,141.1 1100.2,141.1" fill="#2c3032" />
<line x1="1101.4" y1="133.5" x2="1101.4" y2="139.2" stroke="#7888a0" stroke-width="1.0" />
<line x1="1103.1" y1="133.5" x2="1103.1" y2="139.2" stroke="#7888a0" stroke-width="1.0" />
<polygon points="1100.2,145.0 1104.2,145.3 1104.2,157.0 1100.2,157.0" fill="#2c3032" />
<line x1="1101.4" y1="149.3" x2="1101.4" y2="155.0" stroke="#7888a0" stroke-width="1.0" />
<line x1="1103.1" y1="149.3" x2="1103.1" y2="155.0" stroke="#7888a0" stroke-width="1.0" />
<polygon points="1107.8,113.9 1111.8,114.2 1111.8,125.5 1107.8,125.5" fill="#2c3032" />
<line x1="1109.0" y1="118.1" x2="1109.0" y2="123.6" stroke="#7888a0" stroke-width="1.0" />
<line x1="1110.7" y1="118.1" x2="1110.7" y2="123.6" stroke="#7888a0" stroke-width="1.0" />
<polygon points="1107.8,129.2 1111.8,129.5 1111.8,140.8 1107.8,140.8" fill="#2c3032" />
<line x1="1109.0" y1="133.4" x2="1109.0" y2="139.0" stroke="#7888a0" stroke-width="1.0" />
<line x1="1110.7" y1="133.4" x2="1110.7" y2="139.0" stroke="#7888a0" stroke-width="1.0" />
<polygon points="1107.8,144.5 1111.8,144.8 1111.8,156.1 1107.8,156.1" fill="#2c3032" />
<line x1="1109.0" y1="148.7" x2="1109.0" y2="154.3" stroke="#7888a0" stroke-width="1.0" />
<line x1="1110.7" y1="148.7" x2="1110.7" y2="154.3" stroke="#7888a0" stroke-width="1.0" />
<polygon points="1115.4,114.4 1119.4,114.7 1119.4,125.7 1115.4,125.7" fill="#2c3032" />
<line x1="1116.6" y1="118.5" x2="1116.6" y2="123.9" stroke="#7888a0" stroke-width="1.0" />
<line x1="1118.3" y1="118.5" x2="1118.3" y2="123.9" stroke="#7888a0" stroke-width="1.0" />
<polygon points="1115.4,129.3 1119.4,129.6 1119.4,140.5 1115.4,140.5" fill="#2c3032" />
<line x1="1116.6" y1="133.3" x2="1116.6" y2="138.7" stroke="#7888a0" stroke-width="1.0" />
<line x1="1118.3" y1="133.3" x2="1118.3" y2="138.7" stroke="#7888a0" stroke-width="1.0" />
<polygon points="1115.4,144.1 1119.4,144.4 1119.4,155.3 1115.4,155.3" fill="#2c3032" />
<line x1="1116.6" y1="148.1" x2="1116.6" y2="153.5" stroke="#7888a0" stroke-width="1.0" />
<line x1="1118.3" y1="148.1" x2="1118.3" y2="153.5" stroke="#7888a0" stroke-width="1.0" />
<polygon points="1123.0,115.0 1127.0,115.3 1127.0,125.9 1123.0,125.9" fill="#2c3032" />
<line x1="1124.2" y1="118.9" x2="1124.2" y2="124.1" stroke="#7888a0" stroke-width="1.0" />
<line x1="1125.9" y1="118.9" x2="1125.9" y2="124.1" stroke="#7888a0" stroke-width="1.0" />
<polygon points="1123.0,129.3 1127.0,129.6 1127.0,140.2 1123.0,140.2" fill="#2c3032" />
<line x1="1124.2" y1="133.2" x2="1124.2" y2="138.4" stroke="#7888a0" stroke-width="1.0" />
<line x1="1125.9" y1="133.2" x2="1125.9" y2="138.4" stroke="#7888a0" stroke-width="1.0" />
<polygon points="1123.0,143.6 1127.0,143.9 1127.0,154.5 1123.0,154.5" fill="#2c3032" />
<line x1="1124.2" y1="147.5" x2="1124.2" y2="152.7" stroke="#7888a0" stroke-width="1.0" />
<line x1="1125.9" y1="147.5" x2="1125.9" y2="152.7" stroke="#7888a0" stroke-width="1.0" />
<polygon points="1130.6,115.6 1134.6,115.9 1134.6,126.0 1130.6,126.0" fill="#2c3032" />
<line x1="1131.8" y1="119.3" x2="1131.8" y2="124.4" stroke="#7888a0" stroke-width="1.0" />
<line x1="1133.5" y1="119.3" x2="1133.5" y2="124.4" stroke="#7888a0" stroke-width="1.0" />
<polygon points="1130.6,129.4 1134.6,129.7 1134.6,139.8 1130.6,139.8" fill="#2c3032" />
<line x1="1131.8" y1="133.2" x2="1131.8" y2="138.2" stroke="#7888a0" stroke-width="1.0" />
<line x1="1133.5" y1="133.2" x2="1133.5" y2="138.2" stroke="#7888a0" stroke-width="1.0" />
<polygon points="1130.6,143.2 1134.6,143.5 1134.6,153.6 1130.6,153.6" fill="#2c3032" />
<line x1="1131.8" y1="147.0" x2="1131.8" y2="152.0" stroke="#7888a0" stroke-width="1.0" />
<line x1="1133.5" y1="147.0" x2="1133.5" y2="152.0" stroke="#7888a0" stroke-width="1.0" />
<polygon points="1138.2,116.2 1142.2,116.5 1142.2,126.2 1138.2,126.2" fill="#2c3032" />
<line x1="1139.4" y1="119.8" x2="1139.4" y2="124.6" stroke="#7888a0" stroke-width="1.0" />
<line x1="1141.1" y1="119.8" x2="1141.1" y2="124.6" stroke="#7888a0" stroke-width="1.0" />
<polygon points="1138.2,129.4 1142.2,129.7 1142.2,139.5 1138.2,139.5" fill="#2c3032" />
<line x1="1139.4" y1="133.1" x2="1139.4" y2="137.9" stroke="#7888a0" stroke-width="1.0" />
<line x1="1141.1" y1="133.1" x2="1141.1" y2="137.9" stroke="#7888a0" stroke-width="1.0" />
<polygon points="1138.2,142.7 1142.2,143.0 1142.2,152.8 1138.2,152.8" fill="#2c3032" />
<line x1="1139.4" y1="146.4" x2="1139.4" y2="151.2" stroke="#7888a0" stroke-width="1.0" />
<line x1="1141.1" y1="146.4" x2="1141.1" y2="151.2" stroke="#7888a0" stroke-width="1.0" />
<polygon points="1145.8,116.7 1149.8,117.0 1149.8,126.4 1145.8,126.4" fill="#2c3032" />
<line x1="1147.0" y1="120.2" x2="1147.0" y2="124.9" stroke="#7888a0" stroke-width="1.0" />
<line x1="1148.7" y1="120.2" x2="1148.7" y2="124.9" stroke="#7888a0" stroke-width="1.0" />
<polygon points="1145.8,129.5 1149.8,129.8 1149.8,139.2 1145.8,139.2" fill="#2c3032" />
<line x1="1147.0" y1="133.0" x2="1147.0" y2="137.7" stroke="#7888a0" stroke-width="1.0" />
<line x1="1148.7" y1="133.0" x2="1148.7" y2="137.7" stroke="#7888a0" stroke-width="1.0" />
<polygon points="1145.8,142.3 1149.8,142.6 1149.8,152.0 1145.8,152.0" fill="#2c3032" />
<line x1="1147.0" y1="145.8" x2="1147.0" y2="150.4" stroke="#7888a0" stroke-width="1.0" />
<line x1="1148.7" y1="145.8" x2="1148.7" y2="150.4" stroke="#7888a0" stroke-width="1.0" />
<polygon points="1153.4,117.3 1157.4,117.6 1157.4,126.6 1153.4,126.6" fill="#2c3032" />
<line x1="1154.6" y1="120.6" x2="1154.6" y2="125.1" stroke="#7888a0" stroke-width="1.0" />
<line x1="1156.3" y1="120.6" x2="1156.3" y2="125.1" stroke="#7888a0" stroke-width="1.0" />
<polygon points="1153.4,129.6 1157.4,129.9 1157.4,138.9 1153.4,138.9" fill="#2c3032" />
<line x1="1154.6" y1="132.9" x2="1154.6" y2="137.4" stroke="#7888a0" stroke-width="1.0" />
<line x1="1156.3" y1="132.9" x2="1156.3" y2="137.4" stroke="#7888a0" stroke-width="1.0" />
<polygon points="1153.4,141.9 1157.4,142.2 1157.4,151.2 1153.4,151.2" fill="#2c3032" />
<line x1="1154.6" y1="145.2" x2="1154.6" y2="149.7" stroke="#7888a0" stroke-width="1.0" />
<line x1="1156.3" y1="145.2" x2="1156.3" y2="149.7" stroke="#7888a0" stroke-width="1.0" />
<polygon points="1161.0,117.9 1165.0,118.2 1165.0,126.8 1161.0,126.8" fill="#2c3032" />
<line x1="1162.2" y1="121.1" x2="1162.2" y2="125.4" stroke="#7888a0" stroke-width="1.0" />
<line x1="1163.9" y1="121.1" x2="1163.9" y2="125.4" stroke="#7888a0" stroke-width="1.0" />
<polygon points="1161.0,129.6 1165.0,129.9 1165.0,138.6 1161.0,138.6" fill="#2c3032" />
<line x1="1162.2" y1="132.8" x2="1162.2" y2="137.1" stroke="#7888a0" stroke-width="1.0" />
<line x1="1163.9" y1="132.8" x2="1163.9" y2="137.1" stroke="#7888a0" stroke-width="1.0" />
<polygon points="1161.0,141.4 1165.0,141.7 1165.0,150.3 1161.0,150.3" fill="#2c3032" />
<line x1="1162.2" y1="144.6" x2="1162.2" y2="148.9" stroke="#7888a0" stroke-width="1.0" />
<line x1="1163.9" y1="144.6" x2="1163.9" y2="148.9" stroke="#7888a0" stroke-width="1.0" />
<polygon points="1168.6,118.4 1172.6,118.7 1172.6,127.0 1168.6,127.0" fill="#2c3032" />
<line x1="1169.8" y1="121.5" x2="1169.8" y2="125.6" stroke="#7888a0" stroke-width="1.0" />
<line x1="1171.5" y1="121.5" x2="1171.5" y2="125.6" stroke="#7888a0" stroke-width="1.0" />
<polygon points="1168.6,129.7 1172.6,130.0 1172.6,138.2 1168.6,138.2" fill="#2c3032" />
<line x1="1169.8" y1="132.8" x2="1169.8" y2="136.9" stroke="#7888a0" stroke-width="1.0" />
<line x1="1171.5" y1="132.8" x2="1171.5" y2="136.9" stroke="#7888a0" stroke-width="1.0" />
<polygon points="1168.6,141.0 1172.6,141.3 1172.6,149.5 1168.6,149.5" fill="#2c3032" />
<line x1="1169.8" y1="144.0" x2="1169.8" y2="148.1" stroke="#7888a0" stroke-width="1.0" />
<line x1="1171.5" y1="144.0" x2="1171.5" y2="148.1" stroke="#7888a0" stroke-width="1.0" />
<line x1="1096.4" y1="126.0" x2="1174.3" y2="132.0" stroke="#bdb7a6" stroke-width="1.0" />
<line x1="1096.4" y1="142.0" x2="1174.3" y2="145.0" stroke="#bdb7a6" stroke-width="1.0" />
<polygon points="1046.5,160.4 1077.8,127.5 1081.7,162.8" fill="#262a2c" />
<line x1="1049.6" y1="157.1" x2="1051.6" y2="162.0" stroke="#cfc6ae" stroke-width="1.6" />
<line x1="1055.9" y1="150.5" x2="1057.9" y2="162.0" stroke="#cfc6ae" stroke-width="1.6" />
<line x1="1062.2" y1="143.9" x2="1064.2" y2="162.0" stroke="#cfc6ae" stroke-width="1.6" />
<line x1="1068.4" y1="137.4" x2="1070.4" y2="162.0" stroke="#cfc6ae" stroke-width="1.6" />
<line x1="1074.7" y1="130.8" x2="1076.7" y2="162.0" stroke="#cfc6ae" stroke-width="1.6" />
<line x1="1046.5" y1="160.4" x2="1077.8" y2="127.5" stroke="#b8b8b8" stroke-width="1.3" />
<polygon points="1053.0,113.0 1060.0,106.0 1096.0,109.0 1098.0,163.0 1082.0,162.0 1080.0,128.0 1055.0,128.0" fill="#b3542c" />
<polygon points="1053.0,113.0 1060.0,106.0 1096.0,109.0 1089.0,116.0" fill="#c8643a" />
<polygon points="1057.0,110.0 1062.0,108.0 1092.0,111.0 1088.0,114.0" fill="#82839a" />
<line x1="1089.0" y1="116.0" x2="1090.0" y2="163.0" stroke="#8e3f22" stroke-width="1" />
<polygon points="1176.0,103.0 1196.0,104.0 1186.0,152.0 1160.0,149.0" fill="#b3542c" />
<polygon points="1178.4,109.4 1192.4,110.4 1191.0,117.8 1177.2,116.5" fill="#2a2c2e" />
<line x1="1185.4" y1="109.9" x2="1184.1" y2="117.1" stroke="#6a7080" stroke-width="1.2" />
<polygon points="1176.8,119.0 1190.5,120.3 1189.2,127.6 1175.6,126.2" fill="#2a2c2e" />
<line x1="1183.7" y1="119.7" x2="1182.4" y2="126.9" stroke="#6a7080" stroke-width="1.2" />
<polygon points="1175.2,128.7 1188.7,130.2 1187.3,137.5 1174.0,135.8" fill="#2a2c2e" />
<line x1="1182.0" y1="129.4" x2="1180.7" y2="136.7" stroke="#6a7080" stroke-width="1.2" />
<polygon points="1173.6,138.3 1186.8,140.1 1185.5,147.4 1172.4,145.5" fill="#2a2c2e" />
<line x1="1180.2" y1="139.2" x2="1179.0" y2="146.5" stroke="#6a7080" stroke-width="1.2" />
<polygon points="1143.6,185.3 1263.4,201.3 1258.0,234.5 1143.6,218.4" fill="#b3542c" />
<line x1="1143.6" y1="202.0" x2="1259.0" y2="218.0" stroke="#8e3f22" stroke-width="0.8" />
<polygon points="1182.5,86.0 1253.3,91.0 1263.4,201.3 1143.6,185.3 1160.0,149.2 1181.0,152.2 1196.0,104.0 1176.0,103.0" fill="#b3542c" />
<polygon points="1188.0,93.0 1248.0,97.5 1256.5,195.5 1151.0,181.5 1164.0,155.0 1185.0,158.5 1201.0,108.0 1185.0,106.0" fill="#82839a" />
<polygon points="1248.0,97.5 1253.3,91.0 1263.4,201.3 1256.5,195.5" fill="#c8643a" opacity="0.8"/>
<polygon points="1250.0,236.0 1258.0,234.5 1257.0,258.0 1253.0,257.0" fill="#c8643a" opacity="0.8"/>
<polygon points="1062.0,95.0 1072.0,96.2 1072.0,102.0 1062.0,100.8" fill="#747474" />
<line x1="1063.0" y1="97.5" x2="1071.0" y2="98.5" stroke="#a8a8a8" stroke-width="0.8" />
<line x1="1063.0" y1="99.9" x2="1071.0" y2="100.9" stroke="#9a9a9a" stroke-width="0.8" />
<polygon points="1073.0,103.0 1081.0,104.0 1081.0,112.0 1073.0,111.0" fill="#747474" />
<line x1="1074.0" y1="106.2" x2="1080.0" y2="107.0" stroke="#a8a8a8" stroke-width="0.8" />
<line x1="1074.0" y1="109.3" x2="1080.0" y2="110.1" stroke="#9a9a9a" stroke-width="0.8" />
<polygon points="1090.0,92.0 1099.0,93.1 1099.0,100.0 1090.0,98.9" fill="#747474" />
<line x1="1091.0" y1="94.8" x2="1098.0" y2="95.7" stroke="#a8a8a8" stroke-width="0.8" />
<line x1="1091.0" y1="97.6" x2="1098.0" y2="98.5" stroke="#9a9a9a" stroke-width="0.8" />
<polygon points="1108.0,98.0 1119.0,99.3 1119.0,105.0 1108.0,103.7" fill="#747474" />
<line x1="1109.0" y1="100.5" x2="1118.0" y2="101.5" stroke="#a8a8a8" stroke-width="0.8" />
<line x1="1109.0" y1="102.9" x2="1118.0" y2="104.0" stroke="#9a9a9a" stroke-width="0.8" />
<polygon points="1128.0,99.0 1140.0,100.4 1140.0,106.0 1128.0,104.6" fill="#747474" />
<line x1="1129.0" y1="101.5" x2="1139.0" y2="102.7" stroke="#a8a8a8" stroke-width="0.8" />
<line x1="1129.0" y1="103.9" x2="1139.0" y2="105.1" stroke="#9a9a9a" stroke-width="0.8" />
<polygon points="1142.0,100.0 1154.0,101.4 1154.0,108.0 1142.0,106.6" fill="#747474" />
<line x1="1143.0" y1="102.8" x2="1153.0" y2="104.0" stroke="#a8a8a8" stroke-width="0.8" />
<line x1="1143.0" y1="105.6" x2="1153.0" y2="106.8" stroke="#9a9a9a" stroke-width="0.8" />
<polygon points="1162.0,104.0 1172.0,105.2 1172.0,110.0 1162.0,108.8" fill="#747474" />
<line x1="1163.0" y1="106.1" x2="1171.0" y2="107.1" stroke="#a8a8a8" stroke-width="0.8" />
<line x1="1163.0" y1="108.2" x2="1171.0" y2="109.2" stroke="#9a9a9a" stroke-width="0.8" />
<polygon points="1020.0,130.0 1029.0,131.1 1029.0,140.0 1020.0,138.9" fill="#747474" />
<line x1="1021.0" y1="133.5" x2="1028.0" y2="134.4" stroke="#a8a8a8" stroke-width="0.8" />
<line x1="1021.0" y1="137.0" x2="1028.0" y2="137.9" stroke="#9a9a9a" stroke-width="0.8" />
<polygon points="1005.0,150.0 1015.0,151.2 1015.0,159.0 1005.0,157.8" fill="#747474" />
<line x1="1006.0" y1="153.2" x2="1014.0" y2="154.2" stroke="#a8a8a8" stroke-width="0.8" />
<line x1="1006.0" y1="156.3" x2="1014.0" y2="157.3" stroke="#9a9a9a" stroke-width="0.8" />
<polygon points="975.0,170.0 983.0,171.0 983.0,179.0 975.0,178.0" fill="#747474" />
<line x1="976.0" y1="173.2" x2="982.0" y2="174.0" stroke="#a8a8a8" stroke-width="0.8" />
<line x1="976.0" y1="176.3" x2="982.0" y2="177.1" stroke="#9a9a9a" stroke-width="0.8" />
<polygon points="960.0,160.0 967.0,160.8 967.0,170.0 960.0,169.2" fill="#747474" />
<line x1="961.0" y1="163.5" x2="966.0" y2="164.2" stroke="#a8a8a8" stroke-width="0.8" />
<line x1="961.0" y1="167.0" x2="966.0" y2="167.7" stroke="#9a9a9a" stroke-width="0.8" />
<polygon points="930.0,178.0 942.0,179.4 942.0,187.0 930.0,185.6" fill="#747474" />
<line x1="931.0" y1="181.2" x2="941.0" y2="182.3" stroke="#a8a8a8" stroke-width="0.8" />
<line x1="931.0" y1="184.3" x2="941.0" y2="185.5" stroke="#9a9a9a" stroke-width="0.8" />
<polygon points="940.0,182.0 948.0,183.0 948.0,188.0 940.0,187.0" fill="#747474" />
<line x1="941.0" y1="184.1" x2="947.0" y2="184.9" stroke="#a8a8a8" stroke-width="0.8" />
<line x1="941.0" y1="186.2" x2="947.0" y2="187.0" stroke="#9a9a9a" stroke-width="0.8" />
<polygon points="1000.0,175.0 1006.0,175.7 1006.0,185.0 1000.0,184.3" fill="#747474" />
<line x1="1001.0" y1="178.5" x2="1005.0" y2="179.1" stroke="#a8a8a8" stroke-width="0.8" />
<line x1="1001.0" y1="182.0" x2="1005.0" y2="182.6" stroke="#9a9a9a" stroke-width="0.8" />
<polygon points="996.0,183.0 1003.0,183.8 1003.0,195.0 996.0,194.2" fill="#747474" />
<line x1="997.0" y1="187.2" x2="1002.0" y2="187.9" stroke="#a8a8a8" stroke-width="0.8" />
<line x1="997.0" y1="191.4" x2="1002.0" y2="192.1" stroke="#9a9a9a" stroke-width="0.8" />
<polygon points="1005.0,195.0 1015.0,196.2 1015.0,202.0 1005.0,200.8" fill="#747474" />
<line x1="1006.0" y1="197.4" x2="1014.0" y2="198.4" stroke="#a8a8a8" stroke-width="0.8" />
<line x1="1006.0" y1="199.9" x2="1014.0" y2="200.9" stroke="#9a9a9a" stroke-width="0.8" />
<polygon points="1048.0,167.0 1060.0,168.4 1060.0,176.0 1048.0,174.6" fill="#747474" />
<line x1="1049.0" y1="170.2" x2="1059.0" y2="171.3" stroke="#a8a8a8" stroke-width="0.8" />
<line x1="1049.0" y1="173.3" x2="1059.0" y2="174.5" stroke="#9a9a9a" stroke-width="0.8" />
<polygon points="1040.0,170.0 1048.0,171.0 1048.0,177.0 1040.0,176.0" fill="#747474" />
<line x1="1041.0" y1="172.4" x2="1047.0" y2="173.2" stroke="#a8a8a8" stroke-width="0.8" />
<line x1="1041.0" y1="174.9" x2="1047.0" y2="175.7" stroke="#9a9a9a" stroke-width="0.8" />
<polygon points="1065.0,178.0 1079.0,179.7 1079.0,185.0 1065.0,183.3" fill="#747474" />
<line x1="1066.0" y1="180.4" x2="1078.0" y2="181.8" stroke="#a8a8a8" stroke-width="0.8" />
<line x1="1066.0" y1="182.9" x2="1078.0" y2="184.3" stroke="#9a9a9a" stroke-width="0.8" />
<polygon points="1073.0,185.0 1081.0,186.0 1081.0,190.0 1073.0,189.0" fill="#747474" />
<line x1="1074.0" y1="186.8" x2="1080.0" y2="187.6" stroke="#a8a8a8" stroke-width="0.8" />
<line x1="1074.0" y1="188.5" x2="1080.0" y2="189.3" stroke="#9a9a9a" stroke-width="0.8" />
<polygon points="1058.0,196.0 1070.0,197.4 1070.0,205.0 1058.0,203.6" fill="#747474" />
<line x1="1059.0" y1="199.2" x2="1069.0" y2="200.3" stroke="#a8a8a8" stroke-width="0.8" />
<line x1="1059.0" y1="202.3" x2="1069.0" y2="203.5" stroke="#9a9a9a" stroke-width="0.8" />
<polygon points="1072.0,200.0 1080.0,201.0 1080.0,207.0 1072.0,206.0" fill="#747474" />
<line x1="1073.0" y1="202.4" x2="1079.0" y2="203.2" stroke="#a8a8a8" stroke-width="0.8" />
<line x1="1073.0" y1="204.9" x2="1079.0" y2="205.7" stroke="#9a9a9a" stroke-width="0.8" />
<polygon points="1090.0,192.0 1098.0,193.0 1098.0,204.0 1090.0,203.0" fill="#747474" />
<line x1="1091.0" y1="196.2" x2="1097.0" y2="197.0" stroke="#a8a8a8" stroke-width="0.8" />
<line x1="1091.0" y1="200.4" x2="1097.0" y2="201.2" stroke="#9a9a9a" stroke-width="0.8" />
<polygon points="1100.0,203.0 1105.0,203.6 1105.0,211.0 1100.0,210.4" fill="#747474" />
<line x1="1101.0" y1="205.8" x2="1104.0" y2="206.3" stroke="#a8a8a8" stroke-width="0.8" />
<line x1="1101.0" y1="208.6" x2="1104.0" y2="209.1" stroke="#9a9a9a" stroke-width="0.8" />
<polygon points="1198.0,111.0 1203.0,111.6 1203.0,119.0 1198.0,118.4" fill="#747474" />
<line x1="1199.0" y1="113.8" x2="1202.0" y2="114.3" stroke="#a8a8a8" stroke-width="0.8" />
<line x1="1199.0" y1="116.6" x2="1202.0" y2="117.1" stroke="#9a9a9a" stroke-width="0.8" />
<polygon points="1208.0,115.0 1220.0,116.4 1220.0,121.0 1208.0,119.6" fill="#747474" />
<line x1="1209.0" y1="117.1" x2="1219.0" y2="118.3" stroke="#a8a8a8" stroke-width="0.8" />
<line x1="1209.0" y1="119.2" x2="1219.0" y2="120.4" stroke="#9a9a9a" stroke-width="0.8" />
<polygon points="1220.0,128.0 1227.0,128.8 1227.0,136.0 1220.0,135.2" fill="#747474" />
<line x1="1221.0" y1="130.8" x2="1226.0" y2="131.5" stroke="#a8a8a8" stroke-width="0.8" />
<line x1="1221.0" y1="133.6" x2="1226.0" y2="134.3" stroke="#9a9a9a" stroke-width="0.8" />
<polygon points="1235.0,116.0 1245.0,117.2 1245.0,121.0 1235.0,119.8" fill="#747474" />
<line x1="1236.0" y1="117.8" x2="1244.0" y2="118.8" stroke="#a8a8a8" stroke-width="0.8" />
<line x1="1236.0" y1="119.5" x2="1244.0" y2="120.5" stroke="#9a9a9a" stroke-width="0.8" />
<polygon points="1213.0,160.0 1221.0,161.0 1221.0,170.0 1213.0,169.0" fill="#747474" />
<line x1="1214.0" y1="163.5" x2="1220.0" y2="164.3" stroke="#a8a8a8" stroke-width="0.8" />
<line x1="1214.0" y1="167.0" x2="1220.0" y2="167.8" stroke="#9a9a9a" stroke-width="0.8" />
<polygon points="1230.0,171.0 1240.0,172.2 1240.0,177.0 1230.0,175.8" fill="#747474" />
<line x1="1231.0" y1="173.1" x2="1239.0" y2="174.1" stroke="#a8a8a8" stroke-width="0.8" />
<line x1="1231.0" y1="175.2" x2="1239.0" y2="176.2" stroke="#9a9a9a" stroke-width="0.8" />
<polygon points="1247.0,172.0 1253.0,172.7 1253.0,180.0 1247.0,179.3" fill="#747474" />
<line x1="1248.0" y1="174.8" x2="1252.0" y2="175.4" stroke="#a8a8a8" stroke-width="0.8" />
<line x1="1248.0" y1="177.6" x2="1252.0" y2="178.2" stroke="#9a9a9a" stroke-width="0.8" />
<polygon points="1180.0,166.0 1186.0,166.7 1186.0,174.0 1180.0,173.3" fill="#747474" />
<line x1="1181.0" y1="168.8" x2="1185.0" y2="169.4" stroke="#a8a8a8" stroke-width="0.8" />
<line x1="1181.0" y1="171.6" x2="1185.0" y2="172.2" stroke="#9a9a9a" stroke-width="0.8" />
<polygon points="1197.0,170.0 1209.0,171.4 1209.0,177.0 1197.0,175.6" fill="#747474" />
<line x1="1198.0" y1="172.4" x2="1208.0" y2="173.6" stroke="#a8a8a8" stroke-width="0.8" />
<line x1="1198.0" y1="174.9" x2="1208.0" y2="176.1" stroke="#9a9a9a" stroke-width="0.8" />
<polygon points="1238.0,180.0 1244.0,180.7 1244.0,190.0 1238.0,189.3" fill="#747474" />
<line x1="1239.0" y1="183.5" x2="1243.0" y2="184.1" stroke="#a8a8a8" stroke-width="0.8" />
<line x1="1239.0" y1="187.0" x2="1243.0" y2="187.6" stroke="#9a9a9a" stroke-width="0.8" />
<polygon points="1208.0,194.0 1214.0,194.7 1214.0,206.0 1208.0,205.3" fill="#747474" />
<line x1="1209.0" y1="198.2" x2="1213.0" y2="198.8" stroke="#a8a8a8" stroke-width="0.8" />
<line x1="1209.0" y1="202.4" x2="1213.0" y2="203.0" stroke="#9a9a9a" stroke-width="0.8" />
<polygon points="1130.0,215.0 1138.0,216.0 1138.0,223.0 1130.0,222.0" fill="#747474" />
<line x1="1131.0" y1="217.8" x2="1137.0" y2="218.6" stroke="#a8a8a8" stroke-width="0.8" />
<line x1="1131.0" y1="220.6" x2="1137.0" y2="221.4" stroke="#9a9a9a" stroke-width="0.8" />
<polygon points="1160.0,238.0 1167.0,238.8 1167.0,246.0 1160.0,245.2" fill="#747474" />
<line x1="1161.0" y1="240.8" x2="1166.0" y2="241.5" stroke="#a8a8a8" stroke-width="0.8" />
<line x1="1161.0" y1="243.6" x2="1166.0" y2="244.3" stroke="#9a9a9a" stroke-width="0.8" />
<polygon points="1186.0,241.0 1192.0,241.7 1192.0,249.0 1186.0,248.3" fill="#747474" />
<line x1="1187.0" y1="243.8" x2="1191.0" y2="244.4" stroke="#a8a8a8" stroke-width="0.8" />
<line x1="1187.0" y1="246.6" x2="1191.0" y2="247.2" stroke="#9a9a9a" stroke-width="0.8" />
<polygon points="1199.0,243.0 1206.0,243.8 1206.0,249.0 1199.0,248.2" fill="#747474" />
<line x1="1200.0" y1="245.1" x2="1205.0" y2="245.8" stroke="#a8a8a8" stroke-width="0.8" />
<line x1="1200.0" y1="247.2" x2="1205.0" y2="247.9" stroke="#9a9a9a" stroke-width="0.8" />
<polygon points="1112.0,211.0 1117.0,211.6 1117.0,220.0 1112.0,219.4" fill="#747474" />
<line x1="1113.0" y1="214.2" x2="1116.0" y2="214.7" stroke="#a8a8a8" stroke-width="0.8" />
<line x1="1113.0" y1="217.3" x2="1116.0" y2="217.8" stroke="#9a9a9a" stroke-width="0.8" />
<polygon points="1215.0,246.0 1222.0,246.8 1222.0,253.0 1215.0,252.2" fill="#747474" />
<line x1="1216.0" y1="248.4" x2="1221.0" y2="249.1" stroke="#a8a8a8" stroke-width="0.8" />
<line x1="1216.0" y1="250.9" x2="1221.0" y2="251.6" stroke="#9a9a9a" stroke-width="0.8" />
<polygon points="980.0,266.0 996.0,263.0 999.0,278.0 985.0,283.0" fill="#7c7c84" />
<line x1="982.0" y1="274.0" x2="997.0" y2="270.0" stroke="#b0b0b0" stroke-width="0.8" />
<line x1="983.0" y1="279.0" x2="998.0" y2="275.0" stroke="#b0b0b0" stroke-width="0.8" />
<line x1="1099.0" y1="225.0" x2="1100.0" y2="217.0" stroke="#3050ff" stroke-width="1.2" />
<line x1="1099.0" y1="225.0" x2="1106.0" y2="226.0" stroke="#30c030" stroke-width="1.2" />
<line x1="1099.0" y1="225.0" x2="1096.0" y2="230.0" stroke="#ff2020" stroke-width="1.2" />
</svg>
<!--/BUILDING-->
<!-- gizmo -->
<svg style="left:525px;top:210px" width="120" height="120" viewBox="525 210 120 120">
 <circle cx="578" cy="271" r="46.5" fill="#2b2b2b"/>
 <path d="M578 268V250" stroke="#0000f0" stroke-width="2.2"/>
 <path d="M578 245.3l-3.2 8h6.4z" fill="#0000f0"/>
 <text x="581.5" y="239.5" font-family="Liberation Sans" font-size="11" fill="#0000e8" text-anchor="middle">Z</text>
 <path d="M581 272l19.5 2.2" stroke="#00d000" stroke-width="1.8"/>
 <path d="M605.5 274.8l-7-3.6-.6 5.6z" fill="#00d000"/>
 <text x="614.5" y="275.2" font-family="Liberation Sans" font-size="8" fill="#00c800" text-anchor="middle">Y</text>
 <path d="M577 274L571 290" stroke="#f00000" stroke-width="1.6"/>
 <path d="M571.5 283l-2.3 5.5 3.5.6z" fill="#f00000"/>
 <path d="M568.3 290.5l4.6 5.5M572.9 290.5l-4.6 5.5" stroke="#f00000" stroke-width="0.9"/>
 <circle cx="578" cy="271" r="4.3" fill="#a8a8a8"/>
 <circle cx="576.8" cy="269.8" r="1.8" fill="#c8c8c8"/>
</svg>
<!-- view cube -->
<svg style="left:1650px;top:60px" width="120" height="110" viewBox="1650 60 120 110">
 <path d="M1694.8 74.9L1743 80 1738.2 108.2 1670.7 99.3z" fill="#f6f6f6"/>
 <path d="M1670.7 99.3L1738.2 108.2 1732 155 1679.6 143.3z" fill="#ffffff"/>
 <path d="M1670.7 99.3L1738.2 108.2" stroke="#3a3a3a" stroke-width="1.2"/>
 <text transform="translate(1704.5 133) rotate(8) scale(0.86 1.0)" font-family="Liberation Sans" font-size="13" fill="#555" text-anchor="middle">Справа</text>
 <text transform="translate(1710 92) rotate(-60) scale(0.7 0.6)" font-family="Liberation Sans" font-size="10" fill="#bbb" text-anchor="middle">Сверху</text>
</svg>
<!-- BOTTOM PANEL -->
<div class="a" style="left:528px;top:401px;width:1251px;height:39px;background:#555"></div>
<div class="a" style="left:528px;top:440px;width:1251px;height:32px;background:#666"></div>
<div class="a" style="left:528px;top:440px;width:60px;height:32px;background:#fff"></div>
<div class="a" style="left:528px;top:472px;width:1251px;height:308px;background:#fff"></div>
<div class="a" style="left:528px;top:780px;width:1251px;height:10px;background:#6a6a6a"></div>

<!-- bottom panel content -->
<div class="a" style="left:528px;top:471.5px;width:1251px;height:1px;background:#ddd;z-index:1"></div>
<div class="a" style="left:1130px;top:405px;width:48px;height:3px;background:#3a96b8;z-index:2"></div>
<svg style="left:528px;top:401px" width="1251" height="79" viewBox="528 401 1251 79">
 <g fill="#eee">
  <rect x="544" y="417" width="13" height="2"/><rect x="544" y="420.9" width="13" height="2"/><rect x="544" y="425" width="9" height="2"/>
  <path d="M555 425.5l5 2.8-5 2.8z"/>
 </g>
 <rect x="547.3" y="449" width="13" height="13" rx="1.5" fill="none" stroke="#7ab8cc" stroke-width="1.7"/>
 <g fill="none" stroke="#e6e6e6" stroke-width="1.6">
  <path d="M1620.8 416.8v-.3c0-.8-.6-1.5-1.5-1.5h-7.8c-.8 0-1.5.7-1.5 1.5v7.6c0 .8.7 1.5 1.5 1.5h7.8c.8 0 1.5-.7 1.5-1.5v-1.6"/>
  <path d="M1614.7 422.5v-.9c0-.8.7-1.5 1.5-1.5h8c.8 0 1.5.7 1.5 1.5v7.3c0 .8-.7 1.5-1.5 1.5h-8c-.8 0-1.5-.7-1.5-1.5v-.3"/>
 </g>
 <g fill="#eee">
  <rect x="1646" y="415" width="14" height="2"/><rect x="1646" y="430" width="14" height="2"/>
  <path d="M1653 417.6l3.2 3.6h-2.2v4.6h2.2l-3.2 3.6-3.2-3.6h2.2v-4.6h-2.2z"/>
  <rect x="1680" y="422" width="14" height="2.6"/>
  <path d="M1686.3 414h1.4v3.4h2.2l-2.9 3.3-2.9-3.3h2.2zM1686.3 432.5h1.4v-3.4h2.2l-2.9-3.3-2.9 3.3h2.2z"/>
 </g>
 <g transform="translate(1721 423.5)">
  <path fill="#e6e6e6" fill-rule="evenodd" d="M-1.9 -8.2h3.8l.5 2.4 1.9 1 2.3-.8 1.9 3.3-1.8 1.6v2.3l1.8 1.6-1.9 3.3-2.3-.8-1.9 1-.5 2.4h-3.8l-.5-2.4-1.9-1-2.3.8-1.9-3.3 1.8-1.6v-2.3l-1.8-1.6 1.9-3.3 2.3.8 1.9-1zM0 -2.9a2.9 2.9 0 1 0 .01 0z"/>
 </g>
 <path d="M1750.5 421.3l4.6 4.6 4.6-4.6" fill="none" stroke="#e8e8e8" stroke-width="1.7"/>
</svg>
<div class="t" style="left:576.3px;top:415.8px;font-size:14.3px;color:#e6e6e6">Коллизии (количество: 0)</div>
<div class="t" style="left:604px;top:450.5px;font-size:12px;font-weight:bold;color:#e2e2e2;letter-spacing:-0.2px">Статус</div>
<div class="t" style="left:674.6px;top:450.5px;font-size:12px;font-weight:bold;color:#e2e2e2;letter-spacing:-0.2px">Раздел</div>
<div class="t" style="left:874.5px;top:450.5px;font-size:12px;font-weight:bold;color:#e2e2e2;letter-spacing:-0.2px">Элемент (Модель А)</div>
<div class="t" style="left:1074.5px;top:450.5px;font-size:12px;font-weight:bold;color:#e2e2e2;letter-spacing:-0.2px">Элемент (Модель В)</div>
<div class="t" style="left:1274.5px;top:450.5px;font-size:12px;font-weight:bold;color:#e2e2e2;letter-spacing:-0.2px">Выборка</div>
<div class="t" style="left:1474.4px;top:450.5px;font-size:12px;font-weight:bold;color:#e2e2e2;letter-spacing:0px">Этаж (Модель А)</div>
<div class="t" style="left:1624.5px;top:450.5px;font-size:12px;font-weight:bold;color:#e2e2e2;letter-spacing:0px">Заметки</div>
<div class="t" style="left:1441.7px;top:481.5px;font-size:14px;color:#3a3a3a">Отсутствуют данные</div>
<div class="a" style="left:540px;top:781.5px;width:782px;height:7px;background:#3a92b4;border-radius:3.5px;z-index:2"></div>
<svg style="left:528px;top:778px" width="1251" height="14" viewBox="528 778 1251 14"><path d="M533 785l3.5-3.2v6.4z" fill="#3a96b8"/><path d="M1777 785l-3.5-3.2v6.4z" fill="#3a96b8"/></svg>
<!-- RIGHT TOOLBAR -->
<div class="rt" style="top:37px;height:40px"></div>
<div class="rt" style="top:78px;height:92px"></div>
<div class="rt" style="top:171px;height:312px"></div>
<div class="rt" style="top:484px;height:47px"></div>
<div class="rt" style="top:532px;height:181px"></div>
<div class="rt" style="top:714px;height:81px"></div>
<svg style="left:1787px;top:37px" width="37" height="761" viewBox="1787 37 37 761">
 <g fill="none" stroke="#eee" stroke-width="1.6">
  <path d="M1796.5 53.5v-5h5M1808.5 48.5h5v5M1813.5 60.5v5h-5M1801.5 65.5h-5v-5"/>
 </g>
 <path d="M1805 51.8l4.4 2.6v5.1l-4.4 2.6-4.4-2.6v-5.1z" fill="#e0e0e0"/>
 <!-- tree -->
 <g fill="none" stroke="#e6e6e6" stroke-width="1.5" stroke-linecap="round">
  <path d="M1801 108.5h-2.5c-2.8 0-4.8-2-4.8-4.6 0-2.3 1.6-4.2 3.8-4.6-.2-.6-.3-1.2-.3-1.8 0-3.4 2.8-6.2 6.3-6.2 2.8 0 5.1 1.8 6 4.3 3.4.2 6.1 3 6.1 6.4 0 3.5-2.9 6.5-6.4 6.5h-1.8"/>
  <path d="M1805.3 97.5v16.5M1805.3 105.5l4.5-3.2M1805.3 102.6l-4.2-2.6M1808.3 99.8l-1.6 1.5"/>
 </g>
 <!-- screen bracket -->
 <g fill="none" stroke="#e6e6e6" stroke-width="1.3">
  <path d="M1799.8 150.8h-7.3v-17.6h23.2v8"/>
  <path d="M1799.8 150.8v3h2"/>
  <path d="M1802.6 146.5v-4h4M1813.8 142.5h4v4M1817.8 154.8v4h-4M1806.6 158.8h-4v-4" stroke-width="1.5"/>
 </g>
 <path d="M1810.2 146.5l4 2.3v4.6l-4 2.3-4-2.3v-4.6z" fill="#e0e0e0"/>
 <!-- ruler -->
 <g fill="none" stroke="#eee" stroke-width="1.3">
  <rect x="1795.5" y="191.3" width="19.2" height="6.3"/>
  <path d="M1795 199.5h20.5" stroke-width="1.5"/>
  <path d="M1798.3 197.5v-2.4M1801.3 197.5v-1.6M1804.3 197.5v-2.4M1807.3 197.5v-1.6M1810.3 197.5v-2.4M1813 197.5v-1.6" stroke-width="1"/>
 </g>
 <path d="M1791 205l4.3 4h-4.3z" fill="#eee"/>
 <!-- section plane -->
 <path d="M1800.3 233l9.8-8v20.3l-9.8 7.3z" fill="#dcdcdc"/>
 <path d="M1792.5 241.2l7.8-5.9h17l-7.8 5.9z" fill="#555" stroke="#eee" stroke-width="1.2"/>
 <path d="M1800.9 236h8.6v4.6h-8.6z" fill="#dcdcdc"/>
 <!-- cube slice -->
 <g fill="none" stroke="#e6e6e6" stroke-width="1.2">
  <path d="M1793.3 277.3h14.7v16.5h-14.7zM1793.3 277.3l4.3-4.7h19.2l-8.8 4.7M1816.8 272.6v16.5l-8.8 4.7M1797.6 272.6v16.5l-4.3 4.7M1797.6 289.1h19.2"/>
  <path d="M1801 277.5v16.3M1804.6 277.5v16.3"/>
 </g>
 <path d="M1801.8 277.4l3.5-4.6v16.5l-3.5 4.5z" fill="#ddd"/>
 <!-- floor plan -->
 <path d="M1793.5 337.5h25.7v-20h-2" fill="none" stroke="#e0e0e0" stroke-width="1.2"/>
 <path d="M1795.5 335.5h21.5v-19.5" fill="none" stroke="#e0e0e0" stroke-width="2.4"/>
 <g fill="none" stroke="#eee" stroke-width="1.2">
  <path d="M1795.5 316.2h20.5v19.5h-24.3v-16.5z"/>
  <path d="M1791.7 325.3h24.3M1803.8 316.5v19" stroke-dasharray="2 1.2"/>
  <path d="M1810.2 335.7v-3.2h5.8"/>
 </g>
 <path d="M1791.8 319.2l3.7-3v3z" fill="#eee"/>
 <!-- target -->
 <circle cx="1804.8" cy="370.9" r="8.1" fill="none" stroke="#eee" stroke-width="1.7"/>
 <circle cx="1804.8" cy="370.9" r="4.2" fill="#ddd"/>
 <path d="M1804.8 360.7v2.5M1804.8 378.6v2.5M1794.6 370.9h2.5M1812.5 370.9h2.5" stroke="#eee" stroke-width="1.7"/>
 <!-- flag -->
 <circle cx="1804.8" cy="414.8" r="12.8" fill="none" stroke="#ddd" stroke-width="1"/>
 <path d="M1799.8 422.1v-13.6c1.7-.5 3-.3 4.5.5s2.8 1 4.7.5v6.6c-1.9.6-3.2.3-4.7-.5s-2.8-1-4.5-.5" fill="none" stroke="#e0e0e0" stroke-width="1"/>
 <!-- S rect -->
 <text x="1794.5" y="457.8" font-family="Liberation Sans" font-weight="bold" font-size="12.5" fill="#ddd">S</text>
 <g fill="none" stroke="#ddd" stroke-width="1" stroke-dasharray="1.2 1.2">
  <path d="M1806.8 448.3h9M1815.8 448.3v21M1794.2 469.5h21.6M1794.2 460.3v9.2M1794.2 460.3h12.6M1806.6 448.3v12"/>
 </g>
 <g fill="#ddd">
  <rect x="1805.4" y="446.9" width="2.6" height="2.6"/><rect x="1814.5" y="446.9" width="2.6" height="2.6"/>
  <rect x="1792.9" y="459" width="2.6" height="2.6"/><rect x="1805.4" y="459" width="2.6" height="2.6"/>
  <rect x="1792.9" y="468.2" width="2.6" height="2.6"/><rect x="1814.5" y="468.2" width="2.6" height="2.6"/>
 </g>
 <!-- grid lines -->
 <g fill="none" stroke="#ddd" stroke-width="1">
  <path d="M1792 511.8l26.5-15.6M1792 520.5l26.5-15.2M1793.5 505.8L1810 516.6M1801.3 501.3L1818.7 510.7" />
 </g>
 <text x="1792" y="505" font-family="Liberation Sans" font-size="6" fill="#ddd">1</text>
 <text x="1801" y="499" font-family="Liberation Sans" font-size="6" fill="#ddd">2</text>
 <!-- dashed boxes -->
 <g fill="none" stroke="#eee" stroke-width="1.3" stroke-dasharray="2.2 1.6">
  <rect x="1793.6" y="545.3" width="22.9" height="23"/>
  <rect x="1793.6" y="589.3" width="22.9" height="23"/>
  <rect x="1793.6" y="633.5" width="22.9" height="23"/>
  <path d="M1803 700.6h-9.4v-23h22.9v9"/>
 </g>
 <g fill="none" stroke="#ddd" stroke-width="1.1">
  <path d="M1805 550.5l5.4 3v6.2l-5.4 3-5.4-3v-6.2zM1799.6 553.5l5.4 3 5.4-3M1805 556.5v6.2"/>
 </g>
 <path d="M1798 601c2-2.9 4.3-4.3 7-4.3s5 1.4 7 4.3c-2 2.9-4.3 4.3-7 4.3s-5-1.4-7-4.3z" fill="#e0e0e0"/>
 <circle cx="1805" cy="601" r="2.3" fill="#555"/><circle cx="1805" cy="601" r="1.1" fill="#e0e0e0"/>
 <path d="M1797.8 644.8c2-2.9 4.3-4.3 7.2-4.3s5.2 1.4 7.2 4.3c-2 2.9-4.3 4.3-7.2 4.3s-5.2-1.4-7.2-4.3z" fill="#e0e0e0"/>
 <circle cx="1805" cy="644.8" r="2" fill="#555"/>
 <path d="M1798.3 638.3l11 11.5" stroke="#555" stroke-width="2.2"/>
 <path d="M1798.3 638.3l11 11.5" stroke="#e0e0e0" stroke-width="1"/>
 <rect x="1803" y="686.9" width="16" height="16" fill="#ddd"/>
 <path d="M1806.7 690.6l8.6 8.6M1815.3 690.6l-8.6 8.6" stroke="#444" stroke-width="1.2"/>
 <!-- active cube -->
 <rect x="1789" y="722" width="32" height="32" fill="#8c8c8c"/>
 <path d="M1795.2 730.3l7.1-2.3 12.6 3.2-9.4 3.1z" fill="#9a9a9a" stroke="#e4e4e4" stroke-width="1.1"/>
 <path d="M1795.2 730.3l10.3 4v14.5l-8.8-6.9z" fill="#e4e4e4"/>
 <path d="M1805.5 734.3l9.4-3.1-1.1 10.7-8.3 6.9z" fill="#8c8c8c" stroke="#e4e4e4" stroke-width="1.1"/>
 <rect x="1789" y="766" width="32" height="28.7" fill="#8c8c8c"/>
 <g fill="none" stroke="#e6e6e6" stroke-width="1.6">
  <ellipse cx="1805" cy="782" rx="11.3" ry="6.3"/>
  <ellipse cx="1805" cy="782" rx="5" ry="10.5"/>
 </g>
 <path d="M1805 779.5v3.5l-3.2 2.3M1805 783l3.2 2.3" fill="none" stroke="#e6e6e6" stroke-width="1"/>
</svg>
</body></html>
